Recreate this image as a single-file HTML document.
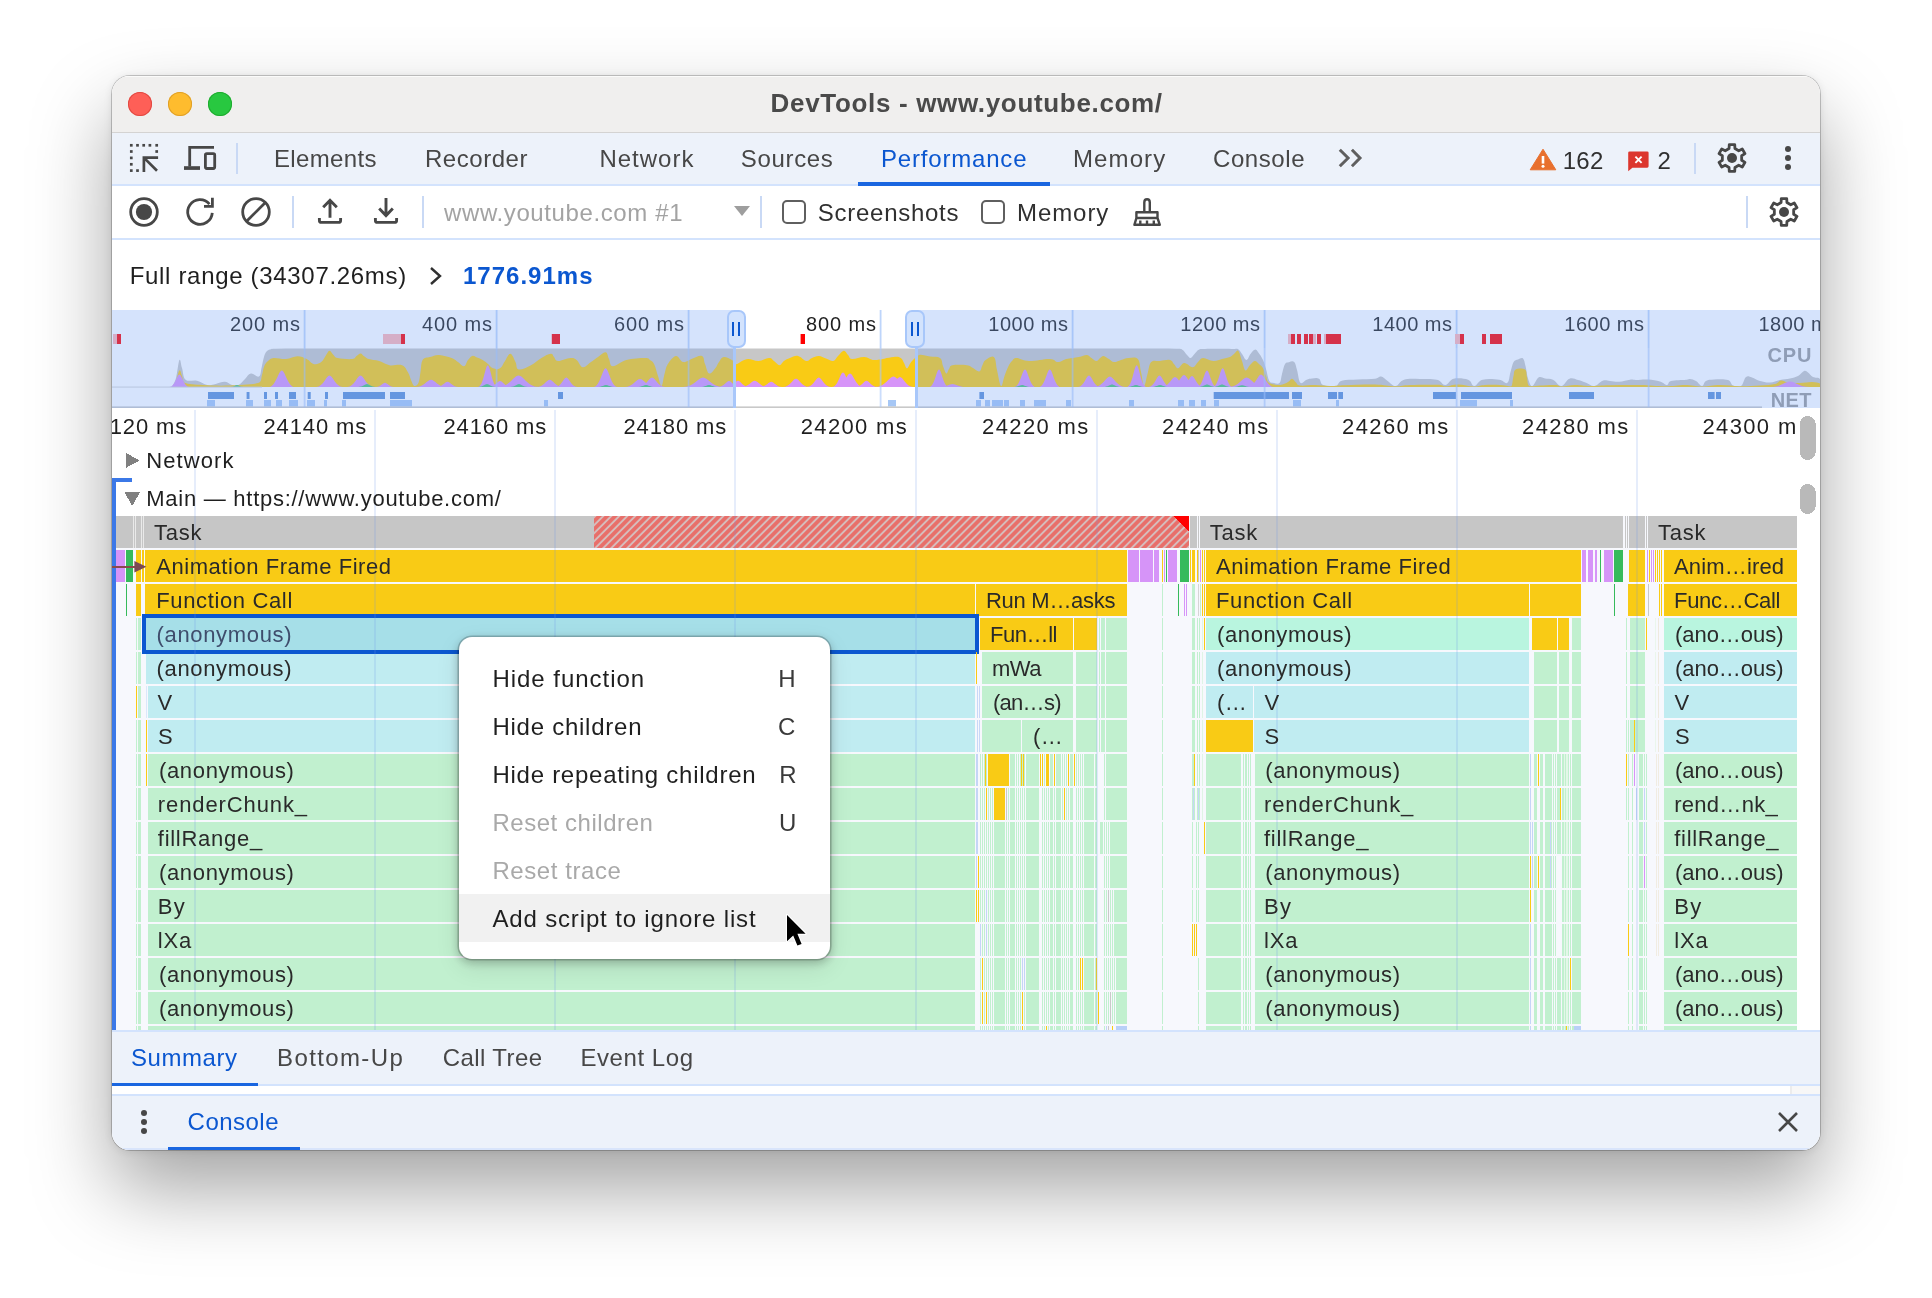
<!DOCTYPE html>
<html lang="en"><head><meta charset="utf-8"><title>DevTools - www.youtube.com/</title>
<style>
html,body{margin:0;padding:0;background:#fff;}
body{width:1932px;height:1298px;position:relative;overflow:hidden;font-family:"Liberation Sans", Arial, sans-serif;}
#shadow{position:absolute;left:112px;top:76px;width:1708px;height:1074px;border-radius:18px;
 box-shadow:0 0 0 1px rgba(0,0,0,.2), 0 39px 80px 0 rgba(0,0,0,.36), 0 1px 8px rgba(0,0,0,.10);}
#win{position:absolute;left:112px;top:76px;width:1708px;height:1074px;border-radius:18px;overflow:hidden;background:#fff;}
#pg{position:absolute;left:-112px;top:-76px;width:1932px;height:1298px;}
.tl{position:absolute;left:0;top:0;width:1932px;height:1298px;will-change:transform;}
svg{position:absolute;overflow:visible}
</style></head><body>
<div id="shadow"></div>
<div id="win"><div id="pg">
<div style="position:absolute;left:112px;top:76px;width:1708px;height:56px;background:#f0efee;"></div>
<div style="position:absolute;left:112px;top:76px;width:1708px;height:1px;background:#fbfbfa;"></div>
<div style="position:absolute;left:112px;top:132px;width:1708px;height:1px;background:#d4d3d2;"></div>
<div style="position:absolute;left:128px;top:92px;width:24px;height:24px;border-radius:50%;background:#fe5f57;box-shadow:inset 0 0 0 1px #e14942;"></div>
<div style="position:absolute;left:168px;top:92px;width:24px;height:24px;border-radius:50%;background:#febc2e;box-shadow:inset 0 0 0 1px #e0a028;"></div>
<div style="position:absolute;left:208px;top:92px;width:24px;height:24px;border-radius:50%;background:#28c840;box-shadow:inset 0 0 0 1px #1fab2f;"></div>
<div style="position:absolute;left:112px;top:133px;width:1708px;height:51px;background:#edf2fa;"></div>
<div style="position:absolute;left:112px;top:184px;width:1708px;height:2px;background:#d3e3fd;"></div>
<div style="position:absolute;left:236px;top:143px;width:2px;height:31px;background:#c9d9f5;"></div>
<div style="position:absolute;left:858px;top:182.4px;width:192px;height:3.6px;background:#1a66e0;"></div>
<div style="position:absolute;left:1694px;top:143px;width:2px;height:31px;background:#c9d9f5;"></div>
<div style="position:absolute;left:112px;top:186px;width:1708px;height:52px;background:#fff;"></div>
<div style="position:absolute;left:112px;top:238px;width:1708px;height:2px;background:#d3e3fd;"></div>
<div style="position:absolute;left:292px;top:196px;width:2px;height:32px;background:#c9d9f5;"></div>
<div style="position:absolute;left:422px;top:196px;width:2px;height:32px;background:#c9d9f5;"></div>
<div style="position:absolute;left:760px;top:196px;width:2px;height:32px;background:#c9d9f5;"></div>
<div style="position:absolute;left:1746px;top:196px;width:2px;height:32px;background:#c9d9f5;"></div>
<div style="position:absolute;left:782px;top:200px;width:20px;height:20px;border:2px solid #5f5f5f;border-radius:5px;background:#fff"></div>
<div style="position:absolute;left:981px;top:200px;width:20px;height:20px;border:2px solid #5f5f5f;border-radius:5px;background:#fff"></div>
<svg style="left:734px;top:206px" width="16" height="10"><path d="M0 0H16L8 10Z" fill="#9e9e9e"/></svg>
<div style="position:absolute;left:112px;top:240px;width:1708px;height:70px;background:#fff;"></div>
<svg style="left:428px;top:266px" width="16" height="20"><path d="M3 2L12 10L3 18" fill="none" stroke="#303030" stroke-width="2.4"/></svg>
<div style="position:absolute;left:112px;top:1030px;width:1708px;height:2px;background:#d3e3fd;"></div>
<div style="position:absolute;left:112px;top:1032px;width:1708px;height:52px;background:#edf2fa;"></div>
<div style="position:absolute;left:112px;top:1084px;width:1708px;height:2px;background:#d3e3fd;"></div>
<div style="position:absolute;left:112px;top:1086px;width:1708px;height:8px;background:#fff;"></div>
<div style="position:absolute;left:1790px;top:1086px;width:30px;height:8px;background:#f7f7f7;"></div>
<div style="position:absolute;left:1790px;top:1086px;width:2px;height:8px;background:#ececec;"></div>
<div style="position:absolute;left:112px;top:1094px;width:1708px;height:2px;background:#d3e3fd;"></div>
<div style="position:absolute;left:112px;top:1096px;width:1708px;height:54px;background:#edf2fa;"></div>
<div style="position:absolute;left:112px;top:1148px;width:1708px;height:2px;background:#d9e5fb;"></div>
<div style="position:absolute;left:112px;top:1083px;width:146px;height:3px;background:#1a66e0;"></div>
<div style="position:absolute;left:168px;top:1147px;width:132px;height:3px;background:#1a66e0;"></div>
<div style="position:absolute;left:141px;top:1110.3px;width:6px;height:6px;border-radius:50%;background:#474747"></div>
<div style="position:absolute;left:141px;top:1119px;width:6px;height:6px;border-radius:50%;background:#474747"></div>
<div style="position:absolute;left:141px;top:1128px;width:6px;height:6px;border-radius:50%;background:#474747"></div>
<svg style="left:1777px;top:1111px" width="22" height="22"><path d="M2 2L20 20M20 2L2 20" stroke="#474747" stroke-width="2.6" fill="none"/></svg>
<svg style="left:112px;top:310px" width="1708" height="98" viewBox="112 310 1708 98" shape-rendering="auto"><rect x="112" y="310" width="1708" height="98" fill="#fff"/><path d="M172.0 387.0C172.8 385.3 174.6 383.1 176.0 378.0C177.4 372.9 178.3 361.9 179.4 360.0C180.5 358.1 180.8 364.3 182.0 368.0C183.2 371.7 182.8 377.3 185.6 379.7C188.4 382.1 192.9 379.7 197.0 380.7C201.1 381.7 203.8 384.4 207.3 385.0C210.8 385.6 212.2 384.5 215.6 383.9C219.0 383.3 221.9 381.6 225.0 381.8C228.1 382.0 229.5 384.4 232.0 385.0C234.5 385.6 235.9 386.1 238.4 385.0C240.9 383.9 242.6 381.2 245.0 379.0C247.4 376.8 248.1 374.0 250.8 373.5C253.5 373.0 257.0 377.6 259.0 376.6C261.0 375.6 260.7 371.2 261.5 368.0C262.3 364.8 262.5 362.7 263.2 360.0C263.9 357.3 264.2 355.8 265.0 354.0C265.8 352.2 266.2 351.6 267.3 350.7C268.4 349.8 269.4 349.6 271.0 349.2C272.6 348.8 271.0 348.8 275.6 348.7C447.6 348.6 1003.7 348.5 1176.0 348.7C1182.3 348.9 1180.2 348.5 1182.3 349.7C1184.4 350.9 1185.4 353.4 1187.0 355.0C1188.6 356.6 1189.2 358.2 1190.6 358.0C1192.0 357.8 1192.9 355.6 1194.5 354.0C1196.1 352.4 1196.8 350.7 1198.8 349.7C1200.8 348.7 1198.8 349.1 1205.0 348.9C1211.3 348.7 1225.7 348.8 1232.0 348.9C1238.2 349.0 1236.3 348.3 1238.2 349.3C1240.1 350.3 1240.4 352.0 1242.0 354.0C1243.6 356.0 1244.9 360.0 1246.5 360.0C1248.1 360.0 1248.9 356.0 1250.5 354.0C1252.1 352.0 1253.3 350.1 1254.7 349.7C1256.1 349.3 1256.4 350.0 1258.0 352.0C1259.6 354.0 1261.5 356.8 1263.0 360.0C1264.5 363.2 1264.8 365.1 1266.0 369.0C1267.2 372.9 1267.7 378.0 1269.2 380.7C1270.7 383.4 1272.0 382.6 1274.0 383.0C1276.0 383.4 1278.2 384.5 1279.7 382.8C1281.2 381.1 1281.0 377.5 1282.0 374.0C1283.0 370.5 1283.6 366.4 1284.9 364.2C1286.2 362.0 1287.2 362.6 1289.0 362.2C1290.8 361.8 1292.7 360.6 1294.2 362.1C1295.7 363.6 1295.8 366.1 1297.0 370.0C1298.2 373.9 1298.6 381.0 1300.4 382.8C1302.2 384.6 1304.4 380.5 1306.6 379.7C1308.8 378.9 1309.6 378.7 1312.0 378.5C1314.4 378.3 1316.9 377.5 1319.0 378.7C1321.1 379.9 1320.0 383.6 1323.2 385.0C1326.4 386.4 1332.1 386.8 1335.6 386.0C1339.1 385.2 1337.5 381.9 1341.8 380.7C1346.1 379.5 1351.7 379.9 1358.0 379.5C1364.3 379.1 1370.6 379.3 1375.0 378.7C1379.4 378.1 1378.8 376.2 1381.1 376.6C1383.4 377.0 1384.5 378.9 1387.3 380.7C1390.1 382.5 1392.4 386.2 1395.6 386.0C1398.8 385.8 1399.4 381.0 1404.0 379.7C1408.6 378.4 1413.7 379.0 1420.0 379.0C1426.3 379.0 1432.2 378.6 1437.0 379.7C1441.8 380.8 1442.1 385.2 1445.3 385.0C1448.5 384.8 1449.3 379.7 1453.6 378.7C1457.9 377.7 1464.2 378.3 1468.1 379.7C1472.0 381.1 1471.5 386.0 1474.3 386.0C1477.1 386.0 1477.9 380.9 1482.6 379.7C1487.3 378.5 1494.5 379.1 1499.2 379.7C1503.9 380.3 1505.3 384.3 1507.4 382.8C1509.5 381.3 1509.3 375.9 1510.5 372.0C1511.7 368.1 1512.2 364.5 1513.6 362.1C1515.0 359.7 1516.2 360.2 1518.0 359.5C1519.8 358.8 1521.6 357.2 1523.0 358.4C1524.4 359.6 1524.5 362.1 1525.5 366.0C1526.5 369.9 1526.8 374.9 1528.1 378.7C1529.4 382.5 1530.3 386.2 1532.3 386.0C1534.3 385.8 1536.1 379.0 1538.5 377.6C1540.9 376.2 1542.2 378.1 1545.0 378.5C1547.8 378.9 1549.9 378.3 1553.0 379.7C1556.1 381.1 1558.2 386.2 1561.3 386.0C1564.4 385.8 1566.3 379.8 1569.5 378.7C1572.7 377.6 1574.8 379.2 1578.0 380.0C1581.2 380.8 1583.0 381.7 1586.1 382.8C1589.2 383.9 1591.2 386.4 1594.4 386.0C1597.6 385.6 1599.7 381.6 1602.7 380.7C1605.7 379.8 1606.9 380.8 1610.0 381.0C1613.1 381.2 1615.4 382.0 1619.2 381.8C1623.0 381.6 1626.8 380.0 1630.0 379.7C1633.2 379.4 1632.6 380.0 1636.0 380.0C1639.4 380.0 1643.4 379.2 1648.0 379.5C1652.6 379.8 1656.4 380.5 1660.0 381.5C1663.6 382.5 1664.9 385.1 1667.0 385.0C1669.1 384.9 1667.4 382.0 1671.0 381.0C1674.6 380.0 1682.4 380.2 1686.0 379.8C1689.6 379.4 1688.1 378.8 1690.0 379.0C1691.9 379.2 1693.7 379.7 1696.0 381.0C1698.3 382.3 1700.1 386.0 1702.0 386.0C1703.9 386.0 1703.7 382.2 1706.0 381.0C1708.3 379.8 1709.8 379.7 1714.0 379.5C1718.2 379.3 1724.4 378.9 1728.0 380.0C1731.6 381.1 1730.5 384.4 1733.0 385.5C1735.5 386.6 1738.5 387.0 1741.0 386.0C1743.5 384.4 1743.9 378.6 1746.0 377.0C1748.1 375.4 1749.3 376.7 1752.0 377.5C1754.7 378.3 1756.6 380.1 1760.0 381.0C1763.4 381.9 1766.2 382.7 1770.0 382.5C1773.8 382.3 1776.2 380.8 1780.0 380.0C1783.8 379.2 1786.6 379.3 1790.0 378.5C1793.4 377.7 1795.3 377.4 1798.0 376.0C1800.7 374.6 1802.1 371.7 1804.0 371.0C1805.9 370.3 1806.3 371.4 1808.0 372.5C1809.7 373.6 1810.7 375.8 1813.0 377.0C1815.3 378.2 1818.7 377.1 1820.0 379.0C1820.0 380.9 1820.0 385.5 1820.0 387.0Z" fill="#c7c7c7"/><path d="M172.0 387.0C172.8 385.9 174.6 384.2 176.0 381.0C177.4 377.8 178.3 371.3 179.4 370.4C180.5 369.4 181.0 373.6 182.0 376.0C183.0 378.4 182.0 381.1 184.5 382.8C188.5 384.5 194.4 384.5 203.0 385.0C211.6 385.5 219.4 385.9 230.0 385.5C240.6 385.1 252.9 384.8 259.0 382.8C262.0 380.8 261.0 378.1 262.0 375.0C263.0 371.9 263.1 369.0 264.2 366.3C265.3 363.6 266.2 362.6 268.0 361.0C269.8 359.4 270.2 358.4 273.6 358.0C277.0 357.6 281.5 359.3 286.0 359.0C290.5 358.7 293.5 356.3 297.4 356.3C301.3 356.3 303.5 357.5 306.7 359.0C309.9 360.5 311.2 363.6 314.0 364.2C316.8 364.8 319.0 363.7 321.2 362.1C323.4 360.5 323.9 358.2 325.5 356.0C327.1 353.8 328.0 350.9 329.5 350.7C331.0 350.5 331.9 353.6 333.5 355.0C335.1 356.4 334.1 357.2 337.7 358.0C341.3 358.8 348.6 359.4 352.2 359.0C355.8 358.6 354.9 357.1 356.5 356.0C358.1 354.9 359.0 353.3 360.5 353.4C362.0 353.5 362.9 355.4 364.5 356.5C366.1 357.6 366.0 358.1 368.8 359.0C371.6 359.9 375.3 359.8 379.2 361.0C383.1 362.2 385.2 364.4 389.5 365.2C393.8 366.0 398.5 363.8 402.0 365.2C405.5 366.6 406.4 369.7 408.1 372.5C409.8 375.3 409.8 377.4 411.0 380.0C412.2 382.6 412.9 385.5 414.3 386.0C415.7 386.5 417.3 385.5 418.5 382.8C419.7 380.1 419.7 376.3 420.5 372.0C421.3 367.7 420.8 362.9 422.6 360.0C424.4 357.1 426.8 358.0 430.0 357.0C433.2 356.0 435.1 354.7 439.2 354.9C443.3 355.1 448.0 356.7 451.6 358.0C455.2 359.3 455.6 360.4 458.0 362.0C460.4 363.6 462.1 366.7 464.0 366.3C465.9 365.9 466.4 362.0 468.0 360.0C469.6 358.0 470.6 356.4 472.3 355.9C474.0 355.4 475.0 356.7 477.0 357.5C479.0 358.3 480.6 358.8 482.7 360.0C484.8 361.2 486.0 362.4 488.0 364.0C490.0 365.6 490.7 367.5 493.0 368.3C495.3 369.1 497.7 369.7 500.0 368.3C502.3 366.9 503.0 363.8 505.0 361.0C507.0 358.2 508.4 353.6 510.4 353.8C512.4 354.0 513.9 359.0 515.5 362.0C517.1 365.0 515.7 368.8 518.6 369.4C521.5 370.0 526.7 367.4 531.0 365.2C535.3 363.0 537.7 360.2 541.4 358.0C545.1 355.8 548.3 354.0 550.7 353.8C553.1 353.6 552.6 355.6 554.0 357.0C555.4 358.4 554.9 360.8 558.0 361.0C561.1 361.2 566.9 358.2 570.4 358.0C573.9 357.8 574.2 358.2 576.6 360.0C579.0 361.8 580.1 366.9 582.8 367.3C585.5 367.7 588.1 364.1 591.0 362.1C593.9 360.1 595.2 358.9 598.0 357.0C600.8 355.1 603.5 351.8 605.6 352.2C607.7 352.6 607.6 356.3 609.0 359.0C610.4 361.7 609.5 366.1 612.8 366.3C616.1 366.5 620.2 361.6 626.3 360.0C632.4 358.4 640.5 358.0 645.0 358.0C649.5 358.0 648.3 358.8 650.0 360.0C651.7 361.2 652.7 361.2 654.2 364.2C655.7 367.2 656.6 371.9 658.0 376.0C659.4 380.1 660.3 386.4 661.5 386.0C662.7 385.6 663.3 378.1 664.5 374.0C665.7 369.9 665.5 367.6 667.7 364.2C669.9 360.8 673.1 356.3 676.0 355.9C678.9 355.5 680.3 361.5 683.2 362.1C686.1 362.7 687.9 360.2 691.5 359.0C695.1 357.8 699.3 354.9 701.9 355.9C704.5 356.8 703.6 360.7 705.0 364.0C706.4 367.3 707.1 372.7 709.1 373.5C711.1 374.3 713.4 370.5 715.3 368.3C717.2 366.1 717.4 364.1 719.0 362.0C720.6 359.9 721.1 357.4 723.6 357.0C726.1 356.6 729.5 358.6 731.9 360.0C734.3 361.4 734.1 364.0 736.0 364.2C737.9 364.4 739.6 362.0 742.0 361.0C744.4 360.0 745.2 359.0 748.4 359.0C751.6 359.0 754.8 361.2 758.8 361.0C762.8 360.8 766.3 358.0 769.2 358.0C772.1 358.0 772.0 359.6 774.0 361.0C776.0 362.4 777.6 365.2 779.5 365.2C781.4 365.2 782.0 362.4 784.0 361.0C786.0 359.6 787.2 359.0 789.9 358.0C792.6 357.0 795.0 355.3 798.1 355.9C801.2 356.5 803.8 360.6 806.4 361.0C809.0 361.4 809.6 359.0 812.0 358.0C814.4 357.0 816.1 355.8 818.8 355.9C821.5 356.0 823.2 357.5 826.0 358.5C828.8 359.5 831.0 361.5 833.3 361.0C835.6 360.5 836.0 358.0 838.0 356.0C840.0 354.0 841.8 350.9 843.7 350.7C845.6 350.5 846.4 353.4 848.0 355.0C849.6 356.6 848.9 358.6 852.0 359.0C855.1 359.4 860.1 356.8 864.4 357.0C868.7 357.2 869.2 360.0 874.7 360.0C880.2 360.0 888.5 357.4 893.4 357.0C898.3 356.6 898.7 356.9 900.7 358.0C902.7 359.1 902.8 361.0 904.0 363.0C905.2 365.0 905.8 368.3 907.0 368.3C908.2 368.3 909.2 364.8 910.5 363.0C911.8 361.2 912.3 360.5 914.0 359.0C915.7 357.5 916.3 355.4 919.3 354.9C922.3 354.4 926.1 355.9 930.0 356.5C933.9 357.1 937.5 356.2 940.0 358.0C942.5 359.8 941.8 363.1 943.0 366.0C944.2 368.9 945.2 372.9 946.3 373.5C947.4 374.1 947.8 370.6 949.0 369.0C950.2 367.4 949.1 365.9 952.5 365.2C955.9 364.5 963.1 364.7 967.0 365.2C970.9 365.7 970.6 366.8 973.0 368.0C975.4 369.2 977.6 372.0 979.4 371.4C981.2 370.8 981.3 367.2 982.5 365.0C983.7 362.8 983.4 361.5 985.6 360.0C987.8 358.5 991.7 355.1 993.9 357.0C996.1 358.9 995.7 364.5 997.0 370.0C998.3 375.5 999.6 384.9 1001.0 386.0C1002.4 387.0 1003.1 379.7 1004.5 376.0C1005.9 372.3 1007.0 369.2 1008.4 366.3C1009.8 363.4 1010.4 362.6 1012.0 361.0C1013.6 359.4 1013.4 358.0 1016.6 358.0C1019.8 358.0 1022.7 360.8 1029.0 361.0C1035.3 361.2 1044.3 358.8 1049.8 359.0C1055.3 359.2 1054.9 362.1 1058.0 362.1C1061.1 362.1 1062.3 360.0 1066.3 359.0C1070.3 358.0 1074.9 357.8 1078.8 357.0C1082.7 356.2 1084.6 354.7 1087.0 354.9C1089.4 355.1 1089.7 356.8 1091.5 358.0C1093.3 359.2 1094.8 361.0 1096.4 361.0C1098.0 361.0 1098.6 359.0 1100.0 358.0C1101.4 357.0 1101.9 355.7 1103.6 355.9C1105.3 356.1 1107.0 357.8 1109.0 359.0C1111.0 360.2 1111.7 361.9 1114.0 362.1C1116.3 362.3 1118.3 360.8 1121.0 360.0C1123.7 359.2 1125.2 358.2 1128.4 358.0C1131.6 357.8 1135.4 356.3 1137.8 359.0C1140.2 361.7 1139.8 366.9 1141.0 372.0C1142.2 377.1 1142.8 385.6 1144.0 386.0C1145.2 386.4 1146.1 378.5 1147.5 374.0C1148.9 369.5 1148.8 364.6 1151.2 362.1C1153.6 359.6 1156.4 361.4 1160.0 361.0C1163.6 360.6 1167.2 359.4 1169.9 360.0C1172.6 360.6 1172.4 362.4 1174.0 364.0C1175.6 365.6 1176.1 368.5 1178.1 368.3C1180.1 368.1 1181.5 363.3 1184.3 363.1C1187.1 362.9 1190.0 367.5 1192.6 367.3C1195.2 367.1 1196.0 363.8 1198.0 362.0C1200.0 360.2 1200.1 358.2 1203.0 358.0C1205.9 357.8 1209.7 360.8 1213.3 361.0C1216.9 361.2 1218.8 359.8 1222.0 359.0C1225.2 358.2 1227.6 357.9 1229.9 357.0C1232.2 356.1 1232.4 355.2 1234.0 354.0C1235.6 352.8 1236.7 349.4 1238.2 350.7C1239.7 352.0 1240.6 357.3 1242.0 361.0C1243.4 364.7 1243.9 369.6 1245.4 370.4C1246.9 371.2 1248.2 366.8 1250.0 365.0C1251.8 363.2 1253.0 361.2 1254.7 361.0C1256.4 360.8 1257.4 362.6 1259.0 364.0C1260.6 365.4 1261.7 366.0 1263.0 368.3C1264.3 370.6 1264.8 373.2 1266.0 376.0C1267.2 378.8 1266.5 381.1 1269.2 382.8C1271.9 384.5 1276.4 385.2 1280.0 385.0C1283.6 384.8 1285.7 383.2 1288.0 382.0C1290.3 380.8 1290.5 378.6 1292.0 378.7C1293.5 378.8 1294.5 381.2 1296.0 382.5C1297.5 383.8 1296.4 385.0 1300.0 385.5C1303.6 386.0 1309.3 384.9 1315.0 385.0C1320.7 385.1 1324.3 385.9 1330.0 386.0C1335.7 386.1 1336.5 385.6 1345.0 385.3C1353.5 385.0 1365.5 384.3 1375.0 384.5C1384.5 384.7 1388.3 386.2 1395.0 386.3C1401.7 386.4 1402.0 385.3 1410.0 385.0C1418.0 384.7 1430.2 384.6 1437.0 384.8C1443.8 385.0 1442.0 386.4 1446.0 386.3C1450.0 386.2 1452.7 384.5 1458.0 384.5C1463.3 384.5 1468.9 386.4 1474.0 386.5C1479.1 386.6 1480.1 385.3 1485.0 385.0C1489.9 384.7 1495.6 384.8 1500.0 385.0C1504.4 385.2 1505.8 385.8 1508.0 386.0C1510.2 386.2 1510.6 387.0 1511.6 386.0C1512.6 384.1 1512.7 379.2 1513.5 376.0C1514.3 372.8 1513.5 370.7 1515.7 369.4C1517.9 368.1 1522.9 368.0 1525.0 369.4C1527.0 370.8 1526.2 373.8 1527.0 377.0C1527.8 380.2 1527.0 384.4 1529.2 386.0C1531.7 387.0 1535.1 385.7 1540.0 385.5C1544.9 385.3 1550.8 384.8 1555.0 385.0C1559.2 385.2 1558.2 386.5 1562.0 386.5C1565.8 386.5 1569.7 385.1 1575.0 385.0C1580.3 384.9 1583.3 386.0 1590.0 386.0C1596.7 386.0 1600.5 385.4 1610.0 385.2C1619.5 385.0 1629.5 384.8 1640.0 385.0C1650.5 385.2 1656.5 386.3 1665.0 386.3C1673.5 386.3 1678.0 385.0 1685.0 385.0C1692.0 385.0 1695.3 386.5 1702.0 386.5C1708.7 386.5 1712.8 385.0 1720.0 385.0C1727.2 385.0 1732.4 386.2 1740.0 386.3C1747.6 386.4 1753.3 385.9 1760.0 385.5C1766.7 385.1 1771.0 384.9 1775.0 384.0C1779.0 383.1 1778.5 380.8 1781.0 380.5C1783.5 380.2 1784.4 382.0 1788.0 382.5C1791.6 383.0 1795.4 383.1 1800.0 383.0C1804.6 382.9 1808.2 381.9 1812.0 382.0C1815.8 382.1 1818.5 382.6 1820.0 383.5C1820.0 384.4 1820.0 386.3 1820.0 387.0Z" fill="#f9cb15"/><path d="M169.5 387.0C174.9 387.0 176.9 374.5 179.4 374.5C181.9 374.5 183.9 387.0 189.3 387.0ZM268.6 387.0C275.8 387.0 278.5 370.4 281.8 370.4C285.1 370.4 287.8 387.0 295.0 387.0ZM316.3 387.0C323.5 387.0 326.2 375.6 329.5 375.6C332.8 375.6 335.5 387.0 342.7 387.0ZM347.3 387.0C354.5 387.0 357.2 375.6 360.5 375.6C363.8 375.6 366.5 387.0 373.7 387.0ZM376.2 387.0C381.0 387.0 382.8 382.8 385.0 382.8C387.2 382.8 389.0 387.0 393.8 387.0ZM415.6 387.0C424.0 387.0 427.1 379.7 431.0 379.7C434.9 379.7 438.0 387.0 446.4 387.0ZM436.5 387.0C442.5 387.0 444.8 381.8 447.5 381.8C450.2 381.8 452.5 387.0 458.5 387.0ZM477.9 387.0C483.3 387.0 485.3 365.2 487.8 365.2C490.3 365.2 492.3 387.0 497.7 387.0ZM489.0 387.0C495.0 387.0 497.2 381 500.0 381C502.8 381 505.0 387.0 511.0 387.0ZM498.8 387.0C509.6 387.0 513.6 375.6 518.6 375.6C523.6 375.6 527.6 387.0 538.4 387.0ZM536.5 387.0C543.7 387.0 546.4 379.7 549.7 379.7C553.0 379.7 555.7 387.0 562.9 387.0ZM555.3 387.0C561.3 387.0 563.5 377.6 566.3 377.6C569.0 377.6 571.3 387.0 577.3 387.0ZM593.5 387.0C600.1 387.0 602.6 368.3 605.6 368.3C608.6 368.3 611.1 387.0 617.7 387.0ZM624.6 387.0C633.0 387.0 636.1 379 640.0 379C643.9 379 647.0 387.0 655.4 387.0ZM638.8 387.0C646.0 387.0 648.7 377.5 652.0 377.5C655.3 377.5 658.0 387.0 665.2 387.0ZM683.2 387.0C694.0 387.0 698.0 377.6 703.0 377.6C708.0 377.6 712.0 387.0 722.8 387.0ZM718.0 387.0C724.0 387.0 726.2 381 729.0 381C731.8 381 734.0 387.0 740.0 387.0ZM727.0 387.0C733.0 387.0 735.2 380.7 738.0 380.7C740.8 380.7 743.0 387.0 749.0 387.0ZM741.5 387.0C748.7 387.0 751.4 380.7 754.7 380.7C758.0 380.7 760.7 387.0 767.9 387.0ZM760.2 387.0C766.2 387.0 768.5 381.8 771.2 381.8C774.0 381.8 776.2 387.0 782.2 387.0ZM782.8 387.0C790.0 387.0 792.7 378.7 796.0 378.7C799.3 378.7 802.0 387.0 809.2 387.0ZM806.7 387.0C813.3 387.0 815.8 377.6 818.8 377.6C821.8 377.6 824.3 387.0 830.9 387.0ZM832.0 387.0C838.0 387.0 840.2 372.5 843.0 372.5C845.8 372.5 848.0 387.0 854.0 387.0ZM836.8 387.0C844.0 387.0 846.7 373.5 850.0 373.5C853.3 373.5 856.0 387.0 863.2 387.0ZM855.5 387.0C861.5 387.0 863.8 380.7 866.5 380.7C869.2 380.7 871.5 387.0 877.5 387.0ZM875.8 387.0C885.4 387.0 889.0 376.6 893.4 376.6C897.8 376.6 901.4 387.0 911.0 387.0ZM886.8 387.0C894.0 387.0 896.7 377 900.0 377C903.3 377 906.0 387.0 913.2 387.0ZM929.1 387.0C934.5 387.0 936.5 369.4 939.0 369.4C941.5 369.4 943.5 387.0 948.9 387.0ZM939.3 387.0C946.5 387.0 949.2 383.9 952.5 383.9C955.8 383.9 958.5 387.0 965.7 387.0ZM1014.0 387.0C1020.0 387.0 1022.2 369.4 1025.0 369.4C1027.8 369.4 1030.0 387.0 1036.0 387.0ZM1038.8 387.0C1044.8 387.0 1047.0 369.4 1049.8 369.4C1052.5 369.4 1054.8 387.0 1060.8 387.0ZM1078.0 387.0C1084.0 387.0 1086.2 375.6 1089.0 375.6C1091.8 375.6 1094.0 387.0 1100.0 387.0ZM1094.4 387.0C1102.8 387.0 1106.0 376.6 1109.8 376.6C1113.6 376.6 1116.8 387.0 1125.2 387.0ZM1126.8 387.0C1132.2 387.0 1134.2 365.2 1136.7 365.2C1139.2 365.2 1141.2 387.0 1146.6 387.0ZM1148.5 387.0C1154.5 387.0 1156.8 375.6 1159.5 375.6C1162.2 375.6 1164.5 387.0 1170.5 387.0ZM1161.8 387.0C1169.0 387.0 1171.7 377 1175.0 377C1178.3 377 1181.0 387.0 1188.2 387.0ZM1170.8 387.0C1178.0 387.0 1180.7 375 1184.0 375C1187.3 375 1190.0 387.0 1197.2 387.0ZM1181.0 387.0C1187.0 387.0 1189.2 376 1192.0 376C1194.8 376 1197.0 387.0 1203.0 387.0ZM1197.1 387.0C1202.5 387.0 1204.5 370.4 1207.0 370.4C1209.5 370.4 1211.5 387.0 1216.9 387.0ZM1212.8 387.0C1218.2 387.0 1220.2 368.3 1222.7 368.3C1225.2 368.3 1227.2 387.0 1232.6 387.0ZM1229.0 387.0C1238.6 387.0 1242.2 377.6 1246.6 377.6C1251.0 377.6 1254.6 387.0 1264.2 387.0ZM1247.8 387.0C1255.0 387.0 1257.7 374.5 1261.0 374.5C1264.3 374.5 1267.0 387.0 1274.2 387.0ZM1770.2 387.0C1781.0 387.0 1785.0 381.5 1790.0 381.5C1795.0 381.5 1799.0 387.0 1809.8 387.0Z" fill="#d694f8"/><path d="M230.4 387.0C234.0 387.0 235.3 385 237.0 385C238.7 385 240.0 387.0 243.6 387.0ZM358.2 387.0C363.0 387.0 364.8 384 367.0 384C369.2 384 371.0 387.0 375.8 387.0ZM478.2 387.0C483.0 387.0 484.8 384 487.0 384C489.2 384 491.0 387.0 495.8 387.0ZM510.2 387.0C515.0 387.0 516.8 384 519.0 384C521.2 384 523.0 387.0 527.8 387.0ZM597.2 387.0C602.0 387.0 603.8 385 606.0 385C608.2 385 610.0 387.0 614.8 387.0ZM637.2 387.0C642.0 387.0 643.8 385 646.0 385C648.2 385 650.0 387.0 654.8 387.0ZM700.2 387.0C705.0 387.0 706.8 385 709.0 385C711.2 385 713.0 387.0 717.8 387.0ZM1013.2 387.0C1018.0 387.0 1019.8 385 1022.0 385C1024.2 385 1026.0 387.0 1030.8 387.0ZM1103.2 387.0C1108.0 387.0 1109.8 384.5 1112.0 384.5C1114.2 384.5 1116.0 387.0 1120.8 387.0ZM1127.2 387.0C1132.0 387.0 1133.8 385 1136.0 385C1138.2 385 1140.0 387.0 1144.8 387.0ZM1151.2 387.0C1156.0 387.0 1157.8 385 1160.0 385C1162.2 385 1164.0 387.0 1168.8 387.0ZM1198.2 387.0C1203.0 387.0 1204.8 384.5 1207.0 384.5C1209.2 384.5 1211.0 387.0 1215.8 387.0ZM1213.2 387.0C1218.0 387.0 1219.8 384.5 1222.0 384.5C1224.2 384.5 1226.0 387.0 1230.8 387.0ZM1233.2 387.0C1238.0 387.0 1239.8 385.3 1242.0 385.3C1244.2 385.3 1246.0 387.0 1250.8 387.0Z" fill="#4cc57a"/><rect x="112" y="387" width="1708" height="21" fill="#fff"/><rect x="112" y="386.6" width="150" height="0.9" fill="#cfcfcf"/><rect x="208" y="392" width="26.0" height="7" fill="#5e90d7"/><rect x="246.6" y="392" width="2.9" height="7" fill="#5e90d7"/><rect x="264" y="392" width="3.0" height="7" fill="#5e90d7"/><rect x="275" y="392" width="3.0" height="7" fill="#5e90d7"/><rect x="289" y="392" width="7.0" height="7" fill="#5e90d7"/><rect x="307.7" y="392" width="3.0" height="7" fill="#5e90d7"/><rect x="325" y="392" width="3.0" height="7" fill="#5e90d7"/><rect x="343" y="392" width="42.0" height="7" fill="#5e90d7"/><rect x="390" y="392" width="15.0" height="7" fill="#5e90d7"/><rect x="558" y="392" width="5.0" height="7" fill="#5e90d7"/><rect x="979.4" y="392" width="4.6" height="7" fill="#5e90d7"/><rect x="1213.7" y="392" width="75.3" height="7" fill="#5e90d7"/><rect x="1292" y="392" width="10.0" height="7" fill="#5e90d7"/><rect x="1328" y="392" width="9.0" height="7" fill="#5e90d7"/><rect x="1338.3" y="392" width="4.7" height="7" fill="#5e90d7"/><rect x="1433" y="392" width="23.0" height="7" fill="#5e90d7"/><rect x="1461" y="392" width="51.0" height="7" fill="#5e90d7"/><rect x="1569" y="392" width="25.0" height="7" fill="#5e90d7"/><rect x="1708" y="392" width="6.6" height="7" fill="#5e90d7"/><rect x="1716" y="392" width="5.0" height="7" fill="#5e90d7"/><rect x="207" y="400" width="8.0" height="6.6" fill="#a6c7f5"/><rect x="246" y="400" width="7.0" height="6.6" fill="#a6c7f5"/><rect x="264" y="400" width="7.0" height="6.6" fill="#a6c7f5"/><rect x="276" y="400" width="6.0" height="6.6" fill="#a6c7f5"/><rect x="289" y="400" width="9.0" height="6.6" fill="#a6c7f5"/><rect x="307" y="400" width="8.0" height="6.6" fill="#a6c7f5"/><rect x="324" y="400" width="3.0" height="6.6" fill="#a6c7f5"/><rect x="342" y="400" width="4.0" height="6.6" fill="#a6c7f5"/><rect x="390" y="400" width="22.0" height="6.6" fill="#a6c7f5"/><rect x="544" y="400" width="4.0" height="6.6" fill="#a6c7f5"/><rect x="888" y="400" width="8.0" height="6.6" fill="#a6c7f5"/><rect x="976" y="400" width="5.0" height="6.6" fill="#a6c7f5"/><rect x="985" y="400" width="5.0" height="6.6" fill="#a6c7f5"/><rect x="992" y="400" width="11.0" height="6.6" fill="#a6c7f5"/><rect x="1004" y="400" width="5.0" height="6.6" fill="#a6c7f5"/><rect x="1020" y="400" width="5.0" height="6.6" fill="#a6c7f5"/><rect x="1034" y="400" width="12.0" height="6.6" fill="#a6c7f5"/><rect x="1066" y="400" width="5.0" height="6.6" fill="#a6c7f5"/><rect x="1129" y="400" width="5.0" height="6.6" fill="#a6c7f5"/><rect x="1178" y="400" width="6.0" height="6.6" fill="#a6c7f5"/><rect x="1189" y="400" width="6.0" height="6.6" fill="#a6c7f5"/><rect x="1201" y="400" width="5.0" height="6.6" fill="#a6c7f5"/><rect x="1214" y="400" width="5.0" height="6.6" fill="#a6c7f5"/><rect x="1293" y="400" width="8.0" height="6.6" fill="#a6c7f5"/><rect x="1336" y="400" width="3.0" height="6.6" fill="#a6c7f5"/><rect x="1460" y="400" width="17.0" height="6.6" fill="#a6c7f5"/><rect x="1510" y="400" width="3.0" height="6.6" fill="#a6c7f5"/><rect x="112" y="406.4" width="1650" height="1.6" fill="#c9c9c9"/><rect x="303.7" y="310" width="1.8" height="38" fill="#a8c7fa" opacity=".75"/><rect x="303.7" y="348" width="1.8" height="59" fill="#a8c7fa" opacity=".6"/><rect x="495.7" y="310" width="1.8" height="38" fill="#a8c7fa" opacity=".75"/><rect x="495.7" y="348" width="1.8" height="59" fill="#a8c7fa" opacity=".6"/><rect x="687.7" y="310" width="1.8" height="38" fill="#a8c7fa" opacity=".75"/><rect x="687.7" y="348" width="1.8" height="59" fill="#a8c7fa" opacity=".6"/><rect x="879.7" y="310" width="1.8" height="38" fill="#a8c7fa" opacity=".75"/><rect x="879.7" y="348" width="1.8" height="59" fill="#a8c7fa" opacity=".6"/><rect x="1071.7" y="310" width="1.8" height="38" fill="#a8c7fa" opacity=".75"/><rect x="1071.7" y="348" width="1.8" height="59" fill="#a8c7fa" opacity=".6"/><rect x="1263.7" y="310" width="1.8" height="38" fill="#a8c7fa" opacity=".75"/><rect x="1263.7" y="348" width="1.8" height="59" fill="#a8c7fa" opacity=".6"/><rect x="1455.7" y="310" width="1.8" height="38" fill="#a8c7fa" opacity=".75"/><rect x="1455.7" y="348" width="1.8" height="59" fill="#a8c7fa" opacity=".6"/><rect x="1647.7" y="310" width="1.8" height="38" fill="#a8c7fa" opacity=".75"/><rect x="1647.7" y="348" width="1.8" height="59" fill="#a8c7fa" opacity=".6"/><rect x="117" y="334" width="4.0" height="10" fill="#ff0000"/><rect x="113" y="334" width="4.0" height="10" fill="#ffb3b3"/><rect x="383" y="334" width="18.0" height="10" fill="#ffb3b3"/><rect x="401" y="334" width="4.0" height="10" fill="#ff0000"/><rect x="551.8" y="334" width="8.2" height="10" fill="#ff0000"/><rect x="800.6" y="334" width="4.4" height="10" fill="#ff0000"/><rect x="1288" y="334" width="3.0" height="10" fill="#ffb3b3"/><rect x="1291" y="334" width="4.0" height="10" fill="#ff0000"/><rect x="1297" y="334" width="4.0" height="10" fill="#ff0000"/><rect x="1304" y="334" width="4.0" height="10" fill="#ff0000"/><rect x="1309" y="334" width="4.0" height="10" fill="#ff0000"/><rect x="1313" y="334" width="3.0" height="10" fill="#ffb3b3"/><rect x="1317" y="334" width="4.0" height="10" fill="#ff0000"/><rect x="1324" y="334" width="2.0" height="10" fill="#ffb3b3"/><rect x="1326" y="334" width="15.0" height="10" fill="#ff0000"/><rect x="1455" y="334" width="5.0" height="10" fill="#ffb3b3"/><rect x="1460" y="334" width="4.0" height="10" fill="#ff0000"/><rect x="1482" y="334" width="4.0" height="10" fill="#ff0000"/><rect x="1490" y="334" width="12.0" height="10" fill="#ff0000"/></svg>
<svg style="left:112px;top:408px" width="1708" height="622" viewBox="112 408 1708 622" shape-rendering="crispEdges"><rect x="112" y="408" width="1708" height="622" fill="#fff"/><rect x="116" y="516" width="1681" height="514" fill="#f7f8fd"/><rect x="116.0" y="516" width="1073.0" height="32" fill="#c6c6c6"/><rect x="133.1" y="516" width="1.0" height="32" fill="#e9e9e9"/><rect x="135.1" y="516" width="1.0" height="32" fill="#e9e9e9"/><rect x="141.1" y="516" width="1.0" height="32" fill="#e9e9e9"/><rect x="143.1" y="516" width="1.0" height="32" fill="#e9e9e9"/><rect x="1190.4" y="516" width="6.2" height="32" fill="#c6c6c6"/><rect x="1198.0" y="516" width="1.0" height="32" fill="#c6c6c6"/><rect x="1200.0" y="516" width="423.0" height="32" fill="#c6c6c6"/><rect x="1624.5" y="516" width="1.0" height="32" fill="#c6c6c6"/><rect x="1626.6" y="516" width="1.0" height="32" fill="#c6c6c6"/><rect x="1629.4" y="516" width="15.6" height="32" fill="#c6c6c6"/><rect x="1646.0" y="516" width="0.8" height="32" fill="#c6c6c6"/><rect x="1647.8" y="516" width="149.4" height="32" fill="#c6c6c6"/><defs><pattern id="hatch" width="8" height="8" patternUnits="userSpaceOnUse" patternTransform="rotate(45) scale(0.7075)"><rect width="8" height="8" fill="#d6bcbb"/><rect width="4.9" height="8" fill="#e86f6a"/></pattern><clipPath id="tri"><rect x="594" y="516" width="595" height="32"/></clipPath></defs><rect x="594" y="516" width="595" height="32" fill="url(#hatch)"/><path d="M1173 516H1189.4V532.4Z" fill="#ff0000"/><rect x="116.0" y="550" width="9.0" height="32" fill="#d694f8"/><rect x="126.0" y="550" width="7.0" height="32" fill="#36ba5c"/><rect x="136.0" y="550" width="5.0" height="32" fill="#f9cb15"/><rect x="142.0" y="550" width="1.5" height="32" fill="#f9cb15"/><rect x="145.0" y="550" width="982.0" height="32" fill="#f9cb15"/><rect x="1128.2" y="550" width="10.5" height="32" fill="#d694f8"/><rect x="1140.3" y="550" width="12.4" height="32" fill="#d694f8"/><rect x="1154.2" y="550" width="4.8" height="32" fill="#d694f8"/><rect x="1161.6" y="550" width="1.0" height="32" fill="#f9cb15"/><rect x="1163.6" y="550" width="1.0" height="32" fill="#d694f8"/><rect x="1166.0" y="550" width="1.0" height="32" fill="#36ba5c"/><rect x="1168.2" y="550" width="8.8" height="32" fill="#d694f8"/><rect x="1180.2" y="550" width="8.6" height="32" fill="#36ba5c"/><rect x="1190.2" y="550" width="0.8" height="32" fill="#f9cb15"/><rect x="1191.8" y="550" width="3.0" height="32" fill="#f9cb15"/><rect x="1196.6" y="550" width="0.9" height="32" fill="#f9cb15"/><rect x="1198.2" y="550" width="0.8" height="32" fill="#c9c9c9"/><rect x="1199.8" y="550" width="0.8" height="32" fill="#d694f8"/><rect x="1201.8" y="550" width="0.8" height="32" fill="#f9cb15"/><rect x="1204.0" y="550" width="1.0" height="32" fill="#f9cb15"/><rect x="1206.3" y="550" width="375.0" height="32" fill="#f9cb15"/><rect x="1582.0" y="550" width="4.0" height="32" fill="#d694f8"/><rect x="1588.0" y="550" width="4.5" height="32" fill="#d694f8"/><rect x="1594.5" y="550" width="2.5" height="32" fill="#d694f8"/><rect x="1600.0" y="550" width="1.0" height="32" fill="#36ba5c"/><rect x="1604.0" y="550" width="8.8" height="32" fill="#d694f8"/><rect x="1614.3" y="550" width="8.7" height="32" fill="#36ba5c"/><rect x="1625.5" y="550" width="0.9" height="32" fill="#f9cb15"/><rect x="1627.6" y="550" width="0.8" height="32" fill="#f9cb15"/><rect x="1629.4" y="550" width="15.6" height="32" fill="#f9cb15"/><rect x="1647.0" y="550" width="1.0" height="32" fill="#d694f8"/><rect x="1649.0" y="550" width="1.0" height="32" fill="#f9cb15"/><rect x="1651.0" y="550" width="1.0" height="32" fill="#d694f8"/><rect x="1653.0" y="550" width="1.0" height="32" fill="#d694f8"/><rect x="1655.4" y="550" width="0.8" height="32" fill="#f9cb15"/><rect x="1657.4" y="550" width="0.8" height="32" fill="#f9cb15"/><rect x="1659.4" y="550" width="0.8" height="32" fill="#f9cb15"/><rect x="1661.4" y="550" width="1.0" height="32" fill="#f9cb15"/><rect x="1664.0" y="550" width="133.2" height="32" fill="#f9cb15"/><rect x="126.2" y="584" width="0.8" height="32" fill="#36ba5c"/><rect x="136.0" y="584" width="5.0" height="32" fill="#f9cb15"/><rect x="142.6" y="584" width="0.8" height="32" fill="#f9cb15"/><rect x="145.0" y="584" width="830.0" height="32" fill="#f9cb15"/><rect x="976.4" y="584" width="150.6" height="32" fill="#f9cb15"/><rect x="1162.0" y="584" width="1.0" height="32" fill="#c1f0cf"/><rect x="1178.0" y="584" width="1.2" height="32" fill="#36ba5c"/><rect x="1184.0" y="584" width="1.0" height="32" fill="#d694f8"/><rect x="1186.0" y="584" width="1.0" height="32" fill="#d694f8"/><rect x="1192.0" y="584" width="3.0" height="32" fill="#c1f0cf"/><rect x="1196.6" y="584" width="0.8" height="32" fill="#c1f0cf"/><rect x="1198.2" y="584" width="0.8" height="32" fill="#d5d5d5"/><rect x="1199.8" y="584" width="0.8" height="32" fill="#c1f0cf"/><rect x="1202.0" y="584" width="1.0" height="32" fill="#f9cb15"/><rect x="1204.0" y="584" width="1.0" height="32" fill="#f9cb15"/><rect x="1206.3" y="584" width="322.4" height="32" fill="#f9cb15"/><rect x="1530.2" y="584" width="51.1" height="32" fill="#f9cb15"/><rect x="1614.0" y="584" width="1.0" height="32" fill="#36ba5c"/><rect x="1628.3" y="584" width="16.7" height="32" fill="#f9cb15"/><rect x="1646.6" y="584" width="0.8" height="32" fill="#c9c9c9"/><rect x="1648.4" y="584" width="0.8" height="32" fill="#c9c9c9"/><rect x="1654.6" y="584" width="0.8" height="32" fill="#f9cb15"/><rect x="1656.6" y="584" width="0.8" height="32" fill="#f9cb15"/><rect x="1658.8" y="584" width="0.8" height="32" fill="#f9cb15"/><rect x="1660.8" y="584" width="1.0" height="32" fill="#f9cb15"/><rect x="1664.0" y="584" width="133.2" height="32" fill="#f9cb15"/><rect x="136.3" y="618" width="0.8" height="32" fill="#c1f0cf"/><rect x="138.0" y="618" width="3.0" height="32" fill="#c1f0cf"/><rect x="136.3" y="652" width="0.8" height="32" fill="#c1f0cf"/><rect x="138.0" y="652" width="3.0" height="32" fill="#c1f0cf"/><rect x="136.3" y="686" width="0.8" height="32" fill="#c1f0cf"/><rect x="138.0" y="686" width="3.0" height="32" fill="#c1f0cf"/><rect x="136.3" y="720" width="0.8" height="32" fill="#c1f0cf"/><rect x="138.0" y="720" width="3.0" height="32" fill="#c1f0cf"/><rect x="136.3" y="754" width="0.8" height="32" fill="#c1f0cf"/><rect x="138.0" y="754" width="3.0" height="32" fill="#c1f0cf"/><rect x="136.3" y="788" width="0.8" height="32" fill="#c1f0cf"/><rect x="138.0" y="788" width="3.0" height="32" fill="#c1f0cf"/><rect x="136.3" y="822" width="0.8" height="32" fill="#c1f0cf"/><rect x="138.0" y="822" width="3.0" height="32" fill="#c1f0cf"/><rect x="136.3" y="856" width="0.8" height="32" fill="#c1f0cf"/><rect x="138.0" y="856" width="3.0" height="32" fill="#c1f0cf"/><rect x="136.3" y="890" width="0.8" height="32" fill="#c1f0cf"/><rect x="138.0" y="890" width="3.0" height="32" fill="#c1f0cf"/><rect x="136.3" y="924" width="0.8" height="32" fill="#c1f0cf"/><rect x="138.0" y="924" width="3.0" height="32" fill="#c1f0cf"/><rect x="136.3" y="958" width="0.8" height="32" fill="#c1f0cf"/><rect x="138.0" y="958" width="3.0" height="32" fill="#c1f0cf"/><rect x="136.3" y="992" width="0.8" height="32" fill="#c1f0cf"/><rect x="138.0" y="992" width="3.0" height="32" fill="#c1f0cf"/><rect x="136.3" y="1026" width="0.8" height="4" fill="#c1f0cf"/><rect x="138.0" y="1026" width="3.0" height="4" fill="#c1f0cf"/><rect x="136.1" y="686" width="1.0" height="32" fill="#f9cb15"/><rect x="146.0" y="720" width="1.0" height="32" fill="#f9cb15"/><rect x="146.0" y="754" width="1.0" height="32" fill="#f9cb15"/><rect x="146.2" y="686" width="0.8" height="32" fill="#dbe7fb"/><rect x="146.0" y="652" width="829.0" height="32" fill="#c0ecf1"/><rect x="148.0" y="686" width="827.0" height="32" fill="#c0ecf1"/><rect x="148.0" y="720" width="827.0" height="32" fill="#c0ecf1"/><rect x="148.0" y="754" width="827.0" height="32" fill="#c1f0cf"/><rect x="148.0" y="788" width="827.0" height="32" fill="#c1f0cf"/><rect x="148.0" y="822" width="827.0" height="32" fill="#c1f0cf"/><rect x="148.0" y="856" width="827.0" height="32" fill="#c1f0cf"/><rect x="148.0" y="890" width="827.0" height="32" fill="#c1f0cf"/><rect x="148.0" y="924" width="827.0" height="32" fill="#c1f0cf"/><rect x="148.0" y="958" width="827.0" height="32" fill="#c1f0cf"/><rect x="148.0" y="992" width="827.0" height="32" fill="#c1f0cf"/><rect x="148.0" y="1026" width="827.0" height="4" fill="#c1f0cf"/><rect x="142" y="614" width="837" height="40" fill="#0b57d0"/><rect x="146" y="618" width="829" height="32" fill="#a6dfe8"/><rect x="980.2" y="618" width="92.5" height="32" fill="#f9cb15"/><rect x="1074.4" y="618" width="22.6" height="32" fill="#f9cb15"/><rect x="976.0" y="652" width="0.9" height="32" fill="#f9cb15"/><rect x="982.0" y="652" width="90.7" height="32" fill="#c1f0cf"/><rect x="1075.8" y="652" width="21.2" height="32" fill="#c1f0cf"/><rect x="982.0" y="686" width="90.7" height="32" fill="#c1f0cf"/><rect x="1075.8" y="686" width="21.2" height="32" fill="#c1f0cf"/><rect x="982.0" y="720" width="39.0" height="32" fill="#c1f0cf"/><rect x="1022.2" y="720" width="50.5" height="32" fill="#c1f0cf"/><rect x="1075.8" y="720" width="21.2" height="32" fill="#c1f0cf"/><rect x="977.2" y="686" width="0.8" height="32" fill="#c9d8f8"/><rect x="979.2" y="686" width="0.8" height="32" fill="#c9d8f8"/><rect x="977.2" y="720" width="0.8" height="32" fill="#c9d8f8"/><rect x="979.2" y="720" width="0.8" height="32" fill="#c9d8f8"/><rect x="1099.0" y="618" width="1.3" height="32" fill="#c1f0cf"/><rect x="1101.2" y="618" width="1.3" height="32" fill="#c1f0cf"/><rect x="1103.4" y="618" width="1.3" height="32" fill="#c1f0cf"/><rect x="1106.0" y="618" width="21.0" height="32" fill="#c1f0cf"/><rect x="1099.0" y="652" width="1.3" height="32" fill="#c1f0cf"/><rect x="1101.2" y="652" width="1.3" height="32" fill="#c1f0cf"/><rect x="1103.4" y="652" width="1.3" height="32" fill="#c1f0cf"/><rect x="1106.0" y="652" width="21.0" height="32" fill="#c1f0cf"/><rect x="1099.0" y="686" width="1.3" height="32" fill="#c1f0cf"/><rect x="1101.2" y="686" width="1.3" height="32" fill="#c1f0cf"/><rect x="1103.4" y="686" width="1.3" height="32" fill="#c1f0cf"/><rect x="1106.0" y="686" width="21.0" height="32" fill="#c1f0cf"/><rect x="1099.0" y="720" width="1.3" height="32" fill="#c1f0cf"/><rect x="1101.2" y="720" width="1.3" height="32" fill="#c1f0cf"/><rect x="1103.4" y="720" width="1.3" height="32" fill="#c1f0cf"/><rect x="1106.0" y="720" width="21.0" height="32" fill="#c1f0cf"/><rect x="993.9" y="754" width="11.0" height="32" fill="#c1f0cf"/><rect x="1010.0" y="754" width="5.1" height="32" fill="#c1f0cf"/><rect x="1026.1" y="754" width="12.7" height="32" fill="#c1f0cf"/><rect x="1049.8" y="754" width="3.1" height="32" fill="#c1f0cf"/><rect x="1056.1" y="754" width="4.7" height="32" fill="#c1f0cf"/><rect x="1070.2" y="754" width="2.9" height="32" fill="#c1f0cf"/><rect x="1084.1" y="754" width="9.8" height="32" fill="#c1f0cf"/><rect x="1094.7" y="754" width="2.2" height="32" fill="#c1f0cf"/><rect x="979.8" y="754" width="1.0" height="32" fill="#c1f0cf"/><rect x="981.9" y="754" width="1.0" height="32" fill="#c1f0cf"/><rect x="984.1" y="754" width="1.0" height="32" fill="#c1f0cf"/><rect x="986.1" y="754" width="1.0" height="32" fill="#c1f0cf"/><rect x="988.0" y="754" width="1.0" height="32" fill="#c1f0cf"/><rect x="990.0" y="754" width="1.0" height="32" fill="#c1f0cf"/><rect x="991.7" y="754" width="1.0" height="32" fill="#c1f0cf"/><rect x="1005.6" y="754" width="1.0" height="32" fill="#c1f0cf"/><rect x="1007.8" y="754" width="1.0" height="32" fill="#c1f0cf"/><rect x="1016.3" y="754" width="1.0" height="32" fill="#c1f0cf"/><rect x="1018.0" y="754" width="1.0" height="32" fill="#c1f0cf"/><rect x="1020.0" y="754" width="1.0" height="32" fill="#c1f0cf"/><rect x="1021.9" y="754" width="1.0" height="32" fill="#c1f0cf"/><rect x="1023.9" y="754" width="1.0" height="32" fill="#c1f0cf"/><rect x="1042.0" y="754" width="1.0" height="32" fill="#c1f0cf"/><rect x="1043.7" y="754" width="1.0" height="32" fill="#c1f0cf"/><rect x="1045.9" y="754" width="1.0" height="32" fill="#c1f0cf"/><rect x="1047.6" y="754" width="1.0" height="32" fill="#c1f0cf"/><rect x="1053.6" y="754" width="1.0" height="32" fill="#c1f0cf"/><rect x="1061.7" y="754" width="1.0" height="32" fill="#c1f0cf"/><rect x="1063.7" y="754" width="1.0" height="32" fill="#c1f0cf"/><rect x="1065.8" y="754" width="1.0" height="32" fill="#c1f0cf"/><rect x="1068.0" y="754" width="1.0" height="32" fill="#c1f0cf"/><rect x="1075.9" y="754" width="1.0" height="32" fill="#c1f0cf"/><rect x="1077.6" y="754" width="1.0" height="32" fill="#c1f0cf"/><rect x="1079.8" y="754" width="1.0" height="32" fill="#c1f0cf"/><rect x="1081.9" y="754" width="1.0" height="32" fill="#c1f0cf"/><rect x="1104.1" y="754" width="1.0" height="32" fill="#c1f0cf"/><rect x="1106.1" y="754" width="1.0" height="32" fill="#c1f0cf"/><rect x="1108.1" y="754" width="1.0" height="32" fill="#c1f0cf"/><rect x="1106.1" y="754" width="20.9" height="32" fill="#c1f0cf"/><rect x="993.9" y="788" width="11.0" height="32" fill="#c1f0cf"/><rect x="1010.0" y="788" width="5.1" height="32" fill="#c1f0cf"/><rect x="1026.1" y="788" width="12.7" height="32" fill="#c1f0cf"/><rect x="1049.8" y="788" width="3.1" height="32" fill="#c1f0cf"/><rect x="1056.1" y="788" width="4.7" height="32" fill="#c1f0cf"/><rect x="1070.2" y="788" width="2.9" height="32" fill="#c1f0cf"/><rect x="1084.1" y="788" width="9.8" height="32" fill="#c1f0cf"/><rect x="1094.7" y="788" width="2.2" height="32" fill="#c1f0cf"/><rect x="979.8" y="788" width="1.0" height="32" fill="#c1f0cf"/><rect x="981.9" y="788" width="1.0" height="32" fill="#c1f0cf"/><rect x="984.1" y="788" width="1.0" height="32" fill="#c1f0cf"/><rect x="986.1" y="788" width="1.0" height="32" fill="#c1f0cf"/><rect x="988.0" y="788" width="1.0" height="32" fill="#c1f0cf"/><rect x="990.0" y="788" width="1.0" height="32" fill="#c1f0cf"/><rect x="991.7" y="788" width="1.0" height="32" fill="#c1f0cf"/><rect x="1005.6" y="788" width="1.0" height="32" fill="#c1f0cf"/><rect x="1007.8" y="788" width="1.0" height="32" fill="#c1f0cf"/><rect x="1016.3" y="788" width="1.0" height="32" fill="#c1f0cf"/><rect x="1018.0" y="788" width="1.0" height="32" fill="#c1f0cf"/><rect x="1020.0" y="788" width="1.0" height="32" fill="#c1f0cf"/><rect x="1021.9" y="788" width="1.0" height="32" fill="#c1f0cf"/><rect x="1023.9" y="788" width="1.0" height="32" fill="#c1f0cf"/><rect x="1042.0" y="788" width="1.0" height="32" fill="#c1f0cf"/><rect x="1043.7" y="788" width="1.0" height="32" fill="#c1f0cf"/><rect x="1045.9" y="788" width="1.0" height="32" fill="#c1f0cf"/><rect x="1047.6" y="788" width="1.0" height="32" fill="#c1f0cf"/><rect x="1053.6" y="788" width="1.0" height="32" fill="#c1f0cf"/><rect x="1061.7" y="788" width="1.0" height="32" fill="#c1f0cf"/><rect x="1063.7" y="788" width="1.0" height="32" fill="#c1f0cf"/><rect x="1065.8" y="788" width="1.0" height="32" fill="#c1f0cf"/><rect x="1068.0" y="788" width="1.0" height="32" fill="#c1f0cf"/><rect x="1075.9" y="788" width="1.0" height="32" fill="#c1f0cf"/><rect x="1077.6" y="788" width="1.0" height="32" fill="#c1f0cf"/><rect x="1079.8" y="788" width="1.0" height="32" fill="#c1f0cf"/><rect x="1081.9" y="788" width="1.0" height="32" fill="#c1f0cf"/><rect x="1104.1" y="788" width="1.0" height="32" fill="#c1f0cf"/><rect x="1106.1" y="788" width="1.0" height="32" fill="#c1f0cf"/><rect x="1108.1" y="788" width="1.0" height="32" fill="#c1f0cf"/><rect x="1106.1" y="788" width="20.9" height="32" fill="#c1f0cf"/><rect x="993.9" y="822" width="11.0" height="32" fill="#c1f0cf"/><rect x="1010.0" y="822" width="5.1" height="32" fill="#c1f0cf"/><rect x="1026.1" y="822" width="12.7" height="32" fill="#c1f0cf"/><rect x="1049.8" y="822" width="3.1" height="32" fill="#c1f0cf"/><rect x="1056.1" y="822" width="4.7" height="32" fill="#c1f0cf"/><rect x="1070.2" y="822" width="2.9" height="32" fill="#c1f0cf"/><rect x="1084.1" y="822" width="9.8" height="32" fill="#c1f0cf"/><rect x="1094.7" y="822" width="2.2" height="32" fill="#c1f0cf"/><rect x="979.8" y="822" width="1.0" height="32" fill="#c1f0cf"/><rect x="981.9" y="822" width="1.0" height="32" fill="#c1f0cf"/><rect x="984.1" y="822" width="1.0" height="32" fill="#c1f0cf"/><rect x="986.1" y="822" width="1.0" height="32" fill="#c1f0cf"/><rect x="988.0" y="822" width="1.0" height="32" fill="#c1f0cf"/><rect x="990.0" y="822" width="1.0" height="32" fill="#c1f0cf"/><rect x="991.7" y="822" width="1.0" height="32" fill="#c1f0cf"/><rect x="1005.6" y="822" width="1.0" height="32" fill="#c1f0cf"/><rect x="1007.8" y="822" width="1.0" height="32" fill="#c1f0cf"/><rect x="1016.3" y="822" width="1.0" height="32" fill="#c1f0cf"/><rect x="1018.0" y="822" width="1.0" height="32" fill="#c1f0cf"/><rect x="1020.0" y="822" width="1.0" height="32" fill="#c1f0cf"/><rect x="1021.9" y="822" width="1.0" height="32" fill="#c1f0cf"/><rect x="1023.9" y="822" width="1.0" height="32" fill="#c1f0cf"/><rect x="1042.0" y="822" width="1.0" height="32" fill="#c1f0cf"/><rect x="1043.7" y="822" width="1.0" height="32" fill="#c1f0cf"/><rect x="1045.9" y="822" width="1.0" height="32" fill="#c1f0cf"/><rect x="1047.6" y="822" width="1.0" height="32" fill="#c1f0cf"/><rect x="1053.6" y="822" width="1.0" height="32" fill="#c1f0cf"/><rect x="1061.7" y="822" width="1.0" height="32" fill="#c1f0cf"/><rect x="1063.7" y="822" width="1.0" height="32" fill="#c1f0cf"/><rect x="1065.8" y="822" width="1.0" height="32" fill="#c1f0cf"/><rect x="1068.0" y="822" width="1.0" height="32" fill="#c1f0cf"/><rect x="1075.9" y="822" width="1.0" height="32" fill="#c1f0cf"/><rect x="1077.6" y="822" width="1.0" height="32" fill="#c1f0cf"/><rect x="1079.8" y="822" width="1.0" height="32" fill="#c1f0cf"/><rect x="1081.9" y="822" width="1.0" height="32" fill="#c1f0cf"/><rect x="1104.1" y="822" width="1.0" height="32" fill="#c1f0cf"/><rect x="1106.1" y="822" width="1.0" height="32" fill="#c1f0cf"/><rect x="1108.1" y="822" width="1.0" height="32" fill="#c1f0cf"/><rect x="1110.0" y="822" width="17.0" height="32" fill="#c1f0cf"/><rect x="1099.8" y="822" width="3.1" height="32" fill="#c1f0cf"/><rect x="993.9" y="856" width="11.0" height="32" fill="#c1f0cf"/><rect x="1010.0" y="856" width="5.1" height="32" fill="#c1f0cf"/><rect x="1026.1" y="856" width="12.7" height="32" fill="#c1f0cf"/><rect x="1049.8" y="856" width="3.1" height="32" fill="#c1f0cf"/><rect x="1056.1" y="856" width="4.7" height="32" fill="#c1f0cf"/><rect x="1070.2" y="856" width="2.9" height="32" fill="#c1f0cf"/><rect x="1084.1" y="856" width="9.8" height="32" fill="#c1f0cf"/><rect x="1094.7" y="856" width="2.2" height="32" fill="#c1f0cf"/><rect x="979.8" y="856" width="1.0" height="32" fill="#c1f0cf"/><rect x="981.9" y="856" width="1.0" height="32" fill="#c1f0cf"/><rect x="984.1" y="856" width="1.0" height="32" fill="#c1f0cf"/><rect x="986.1" y="856" width="1.0" height="32" fill="#c1f0cf"/><rect x="988.0" y="856" width="1.0" height="32" fill="#c1f0cf"/><rect x="990.0" y="856" width="1.0" height="32" fill="#c1f0cf"/><rect x="991.7" y="856" width="1.0" height="32" fill="#c1f0cf"/><rect x="1005.6" y="856" width="1.0" height="32" fill="#c1f0cf"/><rect x="1007.8" y="856" width="1.0" height="32" fill="#c1f0cf"/><rect x="1016.3" y="856" width="1.0" height="32" fill="#c1f0cf"/><rect x="1018.0" y="856" width="1.0" height="32" fill="#c1f0cf"/><rect x="1020.0" y="856" width="1.0" height="32" fill="#c1f0cf"/><rect x="1021.9" y="856" width="1.0" height="32" fill="#c1f0cf"/><rect x="1023.9" y="856" width="1.0" height="32" fill="#c1f0cf"/><rect x="1042.0" y="856" width="1.0" height="32" fill="#c1f0cf"/><rect x="1043.7" y="856" width="1.0" height="32" fill="#c1f0cf"/><rect x="1045.9" y="856" width="1.0" height="32" fill="#c1f0cf"/><rect x="1047.6" y="856" width="1.0" height="32" fill="#c1f0cf"/><rect x="1053.6" y="856" width="1.0" height="32" fill="#c1f0cf"/><rect x="1061.7" y="856" width="1.0" height="32" fill="#c1f0cf"/><rect x="1063.7" y="856" width="1.0" height="32" fill="#c1f0cf"/><rect x="1065.8" y="856" width="1.0" height="32" fill="#c1f0cf"/><rect x="1068.0" y="856" width="1.0" height="32" fill="#c1f0cf"/><rect x="1075.9" y="856" width="1.0" height="32" fill="#c1f0cf"/><rect x="1077.6" y="856" width="1.0" height="32" fill="#c1f0cf"/><rect x="1079.8" y="856" width="1.0" height="32" fill="#c1f0cf"/><rect x="1081.9" y="856" width="1.0" height="32" fill="#c1f0cf"/><rect x="1104.1" y="856" width="1.0" height="32" fill="#c1f0cf"/><rect x="1106.1" y="856" width="1.0" height="32" fill="#c1f0cf"/><rect x="1108.1" y="856" width="1.0" height="32" fill="#c1f0cf"/><rect x="1110.0" y="856" width="17.0" height="32" fill="#c1f0cf"/><rect x="993.9" y="890" width="11.0" height="32" fill="#c1f0cf"/><rect x="1010.0" y="890" width="5.1" height="32" fill="#c1f0cf"/><rect x="1026.1" y="890" width="12.7" height="32" fill="#c1f0cf"/><rect x="1049.8" y="890" width="3.1" height="32" fill="#c1f0cf"/><rect x="1056.1" y="890" width="4.7" height="32" fill="#c1f0cf"/><rect x="1070.2" y="890" width="2.9" height="32" fill="#c1f0cf"/><rect x="1084.1" y="890" width="9.8" height="32" fill="#c1f0cf"/><rect x="1094.7" y="890" width="2.2" height="32" fill="#c1f0cf"/><rect x="979.8" y="890" width="1.0" height="32" fill="#c1f0cf"/><rect x="981.9" y="890" width="1.0" height="32" fill="#c1f0cf"/><rect x="984.1" y="890" width="1.0" height="32" fill="#c1f0cf"/><rect x="986.1" y="890" width="1.0" height="32" fill="#c1f0cf"/><rect x="988.0" y="890" width="1.0" height="32" fill="#c1f0cf"/><rect x="990.0" y="890" width="1.0" height="32" fill="#c1f0cf"/><rect x="991.7" y="890" width="1.0" height="32" fill="#c1f0cf"/><rect x="1005.6" y="890" width="1.0" height="32" fill="#c1f0cf"/><rect x="1007.8" y="890" width="1.0" height="32" fill="#c1f0cf"/><rect x="1016.3" y="890" width="1.0" height="32" fill="#c1f0cf"/><rect x="1018.0" y="890" width="1.0" height="32" fill="#c1f0cf"/><rect x="1020.0" y="890" width="1.0" height="32" fill="#c1f0cf"/><rect x="1021.9" y="890" width="1.0" height="32" fill="#c1f0cf"/><rect x="1023.9" y="890" width="1.0" height="32" fill="#c1f0cf"/><rect x="1042.0" y="890" width="1.0" height="32" fill="#c1f0cf"/><rect x="1043.7" y="890" width="1.0" height="32" fill="#c1f0cf"/><rect x="1045.9" y="890" width="1.0" height="32" fill="#c1f0cf"/><rect x="1047.6" y="890" width="1.0" height="32" fill="#c1f0cf"/><rect x="1053.6" y="890" width="1.0" height="32" fill="#c1f0cf"/><rect x="1061.7" y="890" width="1.0" height="32" fill="#c1f0cf"/><rect x="1063.7" y="890" width="1.0" height="32" fill="#c1f0cf"/><rect x="1065.8" y="890" width="1.0" height="32" fill="#c1f0cf"/><rect x="1068.0" y="890" width="1.0" height="32" fill="#c1f0cf"/><rect x="1075.9" y="890" width="1.0" height="32" fill="#c1f0cf"/><rect x="1077.6" y="890" width="1.0" height="32" fill="#c1f0cf"/><rect x="1079.8" y="890" width="1.0" height="32" fill="#c1f0cf"/><rect x="1081.9" y="890" width="1.0" height="32" fill="#c1f0cf"/><rect x="1104.1" y="890" width="1.0" height="32" fill="#c1f0cf"/><rect x="1106.1" y="890" width="1.0" height="32" fill="#c1f0cf"/><rect x="1110.3" y="890" width="1.0" height="32" fill="#c1f0cf"/><rect x="1112.0" y="890" width="1.0" height="32" fill="#c1f0cf"/><rect x="1113.9" y="890" width="13.1" height="32" fill="#c1f0cf"/><rect x="993.9" y="924" width="11.0" height="32" fill="#c1f0cf"/><rect x="1010.0" y="924" width="5.1" height="32" fill="#c1f0cf"/><rect x="1026.1" y="924" width="12.7" height="32" fill="#c1f0cf"/><rect x="1049.8" y="924" width="3.1" height="32" fill="#c1f0cf"/><rect x="1056.1" y="924" width="4.7" height="32" fill="#c1f0cf"/><rect x="1070.2" y="924" width="2.9" height="32" fill="#c1f0cf"/><rect x="1084.1" y="924" width="9.8" height="32" fill="#c1f0cf"/><rect x="1094.7" y="924" width="2.2" height="32" fill="#c1f0cf"/><rect x="979.8" y="924" width="1.0" height="32" fill="#c1f0cf"/><rect x="981.9" y="924" width="1.0" height="32" fill="#c1f0cf"/><rect x="984.1" y="924" width="1.0" height="32" fill="#c1f0cf"/><rect x="986.1" y="924" width="1.0" height="32" fill="#c1f0cf"/><rect x="988.0" y="924" width="1.0" height="32" fill="#c1f0cf"/><rect x="990.0" y="924" width="1.0" height="32" fill="#c1f0cf"/><rect x="991.7" y="924" width="1.0" height="32" fill="#c1f0cf"/><rect x="1005.6" y="924" width="1.0" height="32" fill="#c1f0cf"/><rect x="1007.8" y="924" width="1.0" height="32" fill="#c1f0cf"/><rect x="1016.3" y="924" width="1.0" height="32" fill="#c1f0cf"/><rect x="1018.0" y="924" width="1.0" height="32" fill="#c1f0cf"/><rect x="1020.0" y="924" width="1.0" height="32" fill="#c1f0cf"/><rect x="1021.9" y="924" width="1.0" height="32" fill="#c1f0cf"/><rect x="1023.9" y="924" width="1.0" height="32" fill="#c1f0cf"/><rect x="1042.0" y="924" width="1.0" height="32" fill="#c1f0cf"/><rect x="1043.7" y="924" width="1.0" height="32" fill="#c1f0cf"/><rect x="1045.9" y="924" width="1.0" height="32" fill="#c1f0cf"/><rect x="1047.6" y="924" width="1.0" height="32" fill="#c1f0cf"/><rect x="1053.6" y="924" width="1.0" height="32" fill="#c1f0cf"/><rect x="1061.7" y="924" width="1.0" height="32" fill="#c1f0cf"/><rect x="1063.7" y="924" width="1.0" height="32" fill="#c1f0cf"/><rect x="1065.8" y="924" width="1.0" height="32" fill="#c1f0cf"/><rect x="1068.0" y="924" width="1.0" height="32" fill="#c1f0cf"/><rect x="1075.9" y="924" width="1.0" height="32" fill="#c1f0cf"/><rect x="1077.6" y="924" width="1.0" height="32" fill="#c1f0cf"/><rect x="1079.8" y="924" width="1.0" height="32" fill="#c1f0cf"/><rect x="1081.9" y="924" width="1.0" height="32" fill="#c1f0cf"/><rect x="1104.1" y="924" width="1.0" height="32" fill="#c1f0cf"/><rect x="1106.1" y="924" width="1.0" height="32" fill="#c1f0cf"/><rect x="1108.1" y="924" width="1.0" height="32" fill="#c1f0cf"/><rect x="1110.3" y="924" width="1.0" height="32" fill="#c1f0cf"/><rect x="1112.0" y="924" width="1.0" height="32" fill="#c1f0cf"/><rect x="1113.9" y="924" width="13.1" height="32" fill="#c1f0cf"/><rect x="993.9" y="958" width="11.0" height="32" fill="#c1f0cf"/><rect x="1010.0" y="958" width="5.1" height="32" fill="#c1f0cf"/><rect x="1026.1" y="958" width="12.7" height="32" fill="#c1f0cf"/><rect x="1049.8" y="958" width="3.1" height="32" fill="#c1f0cf"/><rect x="1056.1" y="958" width="4.7" height="32" fill="#c1f0cf"/><rect x="1070.2" y="958" width="2.9" height="32" fill="#c1f0cf"/><rect x="1084.1" y="958" width="9.8" height="32" fill="#c1f0cf"/><rect x="1094.7" y="958" width="2.2" height="32" fill="#c1f0cf"/><rect x="979.8" y="958" width="1.0" height="32" fill="#c1f0cf"/><rect x="981.9" y="958" width="1.0" height="32" fill="#c1f0cf"/><rect x="984.1" y="958" width="1.0" height="32" fill="#c1f0cf"/><rect x="986.1" y="958" width="1.0" height="32" fill="#c1f0cf"/><rect x="988.0" y="958" width="1.0" height="32" fill="#c1f0cf"/><rect x="990.0" y="958" width="1.0" height="32" fill="#c1f0cf"/><rect x="991.7" y="958" width="1.0" height="32" fill="#c1f0cf"/><rect x="1005.6" y="958" width="1.0" height="32" fill="#c1f0cf"/><rect x="1007.8" y="958" width="1.0" height="32" fill="#c1f0cf"/><rect x="1016.3" y="958" width="1.0" height="32" fill="#c1f0cf"/><rect x="1018.0" y="958" width="1.0" height="32" fill="#c1f0cf"/><rect x="1020.0" y="958" width="1.0" height="32" fill="#c1f0cf"/><rect x="1021.9" y="958" width="1.0" height="32" fill="#c1f0cf"/><rect x="1023.9" y="958" width="1.0" height="32" fill="#c1f0cf"/><rect x="1042.0" y="958" width="1.0" height="32" fill="#c1f0cf"/><rect x="1043.7" y="958" width="1.0" height="32" fill="#c1f0cf"/><rect x="1045.9" y="958" width="1.0" height="32" fill="#c1f0cf"/><rect x="1047.6" y="958" width="1.0" height="32" fill="#c1f0cf"/><rect x="1053.6" y="958" width="1.0" height="32" fill="#c1f0cf"/><rect x="1061.7" y="958" width="1.0" height="32" fill="#c1f0cf"/><rect x="1063.7" y="958" width="1.0" height="32" fill="#c1f0cf"/><rect x="1065.8" y="958" width="1.0" height="32" fill="#c1f0cf"/><rect x="1068.0" y="958" width="1.0" height="32" fill="#c1f0cf"/><rect x="1075.9" y="958" width="1.0" height="32" fill="#c1f0cf"/><rect x="1077.6" y="958" width="1.0" height="32" fill="#c1f0cf"/><rect x="1079.8" y="958" width="1.0" height="32" fill="#c1f0cf"/><rect x="1081.9" y="958" width="1.0" height="32" fill="#c1f0cf"/><rect x="1104.1" y="958" width="1.0" height="32" fill="#c1f0cf"/><rect x="1106.1" y="958" width="1.0" height="32" fill="#c1f0cf"/><rect x="1108.1" y="958" width="1.0" height="32" fill="#c1f0cf"/><rect x="1110.3" y="958" width="1.0" height="32" fill="#c1f0cf"/><rect x="1112.0" y="958" width="1.0" height="32" fill="#c1f0cf"/><rect x="1113.7" y="958" width="1.0" height="32" fill="#c1f0cf"/><rect x="1115.9" y="958" width="11.1" height="32" fill="#c1f0cf"/><rect x="993.9" y="992" width="11.0" height="32" fill="#c1f0cf"/><rect x="1010.0" y="992" width="5.1" height="32" fill="#c1f0cf"/><rect x="1026.1" y="992" width="12.7" height="32" fill="#c1f0cf"/><rect x="1049.8" y="992" width="3.1" height="32" fill="#c1f0cf"/><rect x="1056.1" y="992" width="4.7" height="32" fill="#c1f0cf"/><rect x="1070.2" y="992" width="2.9" height="32" fill="#c1f0cf"/><rect x="1084.1" y="992" width="9.8" height="32" fill="#c1f0cf"/><rect x="1094.7" y="992" width="2.2" height="32" fill="#c1f0cf"/><rect x="979.8" y="992" width="1.0" height="32" fill="#c1f0cf"/><rect x="981.9" y="992" width="1.0" height="32" fill="#c1f0cf"/><rect x="984.1" y="992" width="1.0" height="32" fill="#c1f0cf"/><rect x="986.1" y="992" width="1.0" height="32" fill="#c1f0cf"/><rect x="988.0" y="992" width="1.0" height="32" fill="#c1f0cf"/><rect x="990.0" y="992" width="1.0" height="32" fill="#c1f0cf"/><rect x="991.7" y="992" width="1.0" height="32" fill="#c1f0cf"/><rect x="1005.6" y="992" width="1.0" height="32" fill="#c1f0cf"/><rect x="1007.8" y="992" width="1.0" height="32" fill="#c1f0cf"/><rect x="1016.3" y="992" width="1.0" height="32" fill="#c1f0cf"/><rect x="1018.0" y="992" width="1.0" height="32" fill="#c1f0cf"/><rect x="1020.0" y="992" width="1.0" height="32" fill="#c1f0cf"/><rect x="1021.9" y="992" width="1.0" height="32" fill="#c1f0cf"/><rect x="1023.9" y="992" width="1.0" height="32" fill="#c1f0cf"/><rect x="1042.0" y="992" width="1.0" height="32" fill="#c1f0cf"/><rect x="1043.7" y="992" width="1.0" height="32" fill="#c1f0cf"/><rect x="1045.9" y="992" width="1.0" height="32" fill="#c1f0cf"/><rect x="1047.6" y="992" width="1.0" height="32" fill="#c1f0cf"/><rect x="1053.6" y="992" width="1.0" height="32" fill="#c1f0cf"/><rect x="1061.7" y="992" width="1.0" height="32" fill="#c1f0cf"/><rect x="1063.7" y="992" width="1.0" height="32" fill="#c1f0cf"/><rect x="1065.8" y="992" width="1.0" height="32" fill="#c1f0cf"/><rect x="1068.0" y="992" width="1.0" height="32" fill="#c1f0cf"/><rect x="1075.9" y="992" width="1.0" height="32" fill="#c1f0cf"/><rect x="1077.6" y="992" width="1.0" height="32" fill="#c1f0cf"/><rect x="1079.8" y="992" width="1.0" height="32" fill="#c1f0cf"/><rect x="1081.9" y="992" width="1.0" height="32" fill="#c1f0cf"/><rect x="1104.1" y="992" width="1.0" height="32" fill="#c1f0cf"/><rect x="1106.1" y="992" width="1.0" height="32" fill="#c1f0cf"/><rect x="1108.1" y="992" width="1.0" height="32" fill="#c1f0cf"/><rect x="1112.0" y="992" width="1.0" height="32" fill="#c1f0cf"/><rect x="1113.7" y="992" width="1.0" height="32" fill="#c1f0cf"/><rect x="1115.9" y="992" width="11.1" height="32" fill="#c1f0cf"/><rect x="993.9" y="1026" width="11.0" height="4" fill="#c1f0cf"/><rect x="1010.0" y="1026" width="5.1" height="4" fill="#c1f0cf"/><rect x="1026.1" y="1026" width="12.7" height="4" fill="#c1f0cf"/><rect x="1049.8" y="1026" width="3.1" height="4" fill="#c1f0cf"/><rect x="1056.1" y="1026" width="4.7" height="4" fill="#c1f0cf"/><rect x="1070.2" y="1026" width="2.9" height="4" fill="#c1f0cf"/><rect x="1084.1" y="1026" width="9.8" height="4" fill="#c1f0cf"/><rect x="1094.7" y="1026" width="2.2" height="4" fill="#c1f0cf"/><rect x="979.8" y="1026" width="1.0" height="4" fill="#c1f0cf"/><rect x="981.9" y="1026" width="1.0" height="4" fill="#c1f0cf"/><rect x="984.1" y="1026" width="1.0" height="4" fill="#c1f0cf"/><rect x="986.1" y="1026" width="1.0" height="4" fill="#c1f0cf"/><rect x="988.0" y="1026" width="1.0" height="4" fill="#c1f0cf"/><rect x="990.0" y="1026" width="1.0" height="4" fill="#c1f0cf"/><rect x="991.7" y="1026" width="1.0" height="4" fill="#c1f0cf"/><rect x="1005.6" y="1026" width="1.0" height="4" fill="#c1f0cf"/><rect x="1007.8" y="1026" width="1.0" height="4" fill="#c1f0cf"/><rect x="1016.3" y="1026" width="1.0" height="4" fill="#c1f0cf"/><rect x="1018.0" y="1026" width="1.0" height="4" fill="#c1f0cf"/><rect x="1020.0" y="1026" width="1.0" height="4" fill="#c1f0cf"/><rect x="1021.9" y="1026" width="1.0" height="4" fill="#c1f0cf"/><rect x="1023.9" y="1026" width="1.0" height="4" fill="#c1f0cf"/><rect x="1042.0" y="1026" width="1.0" height="4" fill="#c1f0cf"/><rect x="1043.7" y="1026" width="1.0" height="4" fill="#c1f0cf"/><rect x="1045.9" y="1026" width="1.0" height="4" fill="#c1f0cf"/><rect x="1047.6" y="1026" width="1.0" height="4" fill="#c1f0cf"/><rect x="1053.6" y="1026" width="1.0" height="4" fill="#c1f0cf"/><rect x="1061.7" y="1026" width="1.0" height="4" fill="#c1f0cf"/><rect x="1063.7" y="1026" width="1.0" height="4" fill="#c1f0cf"/><rect x="1065.8" y="1026" width="1.0" height="4" fill="#c1f0cf"/><rect x="1068.0" y="1026" width="1.0" height="4" fill="#c1f0cf"/><rect x="1075.9" y="1026" width="1.0" height="4" fill="#c1f0cf"/><rect x="1077.6" y="1026" width="1.0" height="4" fill="#c1f0cf"/><rect x="1079.8" y="1026" width="1.0" height="4" fill="#c1f0cf"/><rect x="1081.9" y="1026" width="1.0" height="4" fill="#c1f0cf"/><rect x="1104.1" y="1026" width="1.0" height="4" fill="#c1f0cf"/><rect x="1115.9" y="1026" width="11.1" height="4" fill="#c1f0cf"/><rect x="988.0" y="754" width="21.0" height="32" fill="#f9cb15"/><rect x="985.4" y="754" width="0.9" height="32" fill="#f9cb15"/><rect x="1040.0" y="754" width="0.9" height="32" fill="#f9cb15"/><rect x="1042.0" y="754" width="0.9" height="32" fill="#f9cb15"/><rect x="1054.4" y="754" width="0.9" height="32" fill="#f9cb15"/><rect x="1068.4" y="754" width="0.9" height="32" fill="#f9cb15"/><rect x="1074.4" y="754" width="0.9" height="32" fill="#f9cb15"/><rect x="1060.5" y="754" width="0.9" height="32" fill="#f9cb15"/><rect x="1020.8" y="754" width="0.9" height="32" fill="#f9cb15"/><rect x="1023.0" y="754" width="0.9" height="32" fill="#f9cb15"/><rect x="1046.0" y="754" width="3.0" height="32" fill="#f9cb15"/><rect x="975.6" y="754" width="1.0" height="32" fill="#c5d5f7"/><rect x="975.6" y="788" width="1.0" height="32" fill="#c5d5f7"/><rect x="977.3" y="754" width="1.0" height="32" fill="#c5d5f7"/><rect x="977.3" y="788" width="1.0" height="32" fill="#c5d5f7"/><rect x="994.0" y="788" width="11.0" height="32" fill="#f9cb15"/><rect x="986.0" y="788" width="1.0" height="32" fill="#f9cb15"/><rect x="1064.0" y="788" width="1.0" height="32" fill="#f9cb15"/><rect x="1006.2" y="788" width="0.8" height="32" fill="#c9c9c9"/><rect x="975.6" y="822" width="1.0" height="32" fill="#c5d5f7"/><rect x="977.3" y="822" width="1.0" height="32" fill="#c5d5f7"/><rect x="975.6" y="856" width="1.0" height="32" fill="#c5d5f7"/><rect x="977.8" y="856" width="1.0" height="32" fill="#f9cb15"/><rect x="975.9" y="890" width="1.0" height="32" fill="#f9cb15"/><rect x="977.8" y="890" width="1.0" height="32" fill="#f9cb15"/><rect x="986.1" y="890" width="1.0" height="32" fill="#c5d5f7"/><rect x="1108.1" y="890" width="1.0" height="32" fill="#c9c9c9"/><rect x="979.8" y="924" width="1.0" height="32" fill="#c5d5f7"/><rect x="986.1" y="924" width="1.0" height="32" fill="#c5d5f7"/><rect x="981.9" y="958" width="1.0" height="32" fill="#f9cb15"/><rect x="1021.9" y="958" width="1.0" height="32" fill="#c5d5f7"/><rect x="1023.9" y="958" width="1.0" height="32" fill="#c5d5f7"/><rect x="1079.8" y="958" width="1.0" height="32" fill="#f9cb15"/><rect x="1081.9" y="958" width="1.0" height="32" fill="#f9cb15"/><rect x="1095.9" y="958" width="1.0" height="32" fill="#f9cb15"/><rect x="981.9" y="992" width="1.0" height="32" fill="#f9cb15"/><rect x="986.1" y="992" width="1.0" height="32" fill="#f9cb15"/><rect x="1021.9" y="992" width="1.0" height="32" fill="#f9cb15"/><rect x="1098.0" y="992" width="1.0" height="32" fill="#f9cb15"/><rect x="1110.0" y="992" width="1.0" height="32" fill="#c9c9c9"/><rect x="1021.9" y="1026" width="1.0" height="4" fill="#f9cb15"/><rect x="1045.9" y="1026" width="1.0" height="4" fill="#f9cb15"/><rect x="1106.1" y="1026" width="1.0" height="4" fill="#c5d5f7"/><rect x="1108.1" y="1026" width="1.0" height="4" fill="#c9c9c9"/><rect x="1112.0" y="1026" width="1.0" height="4" fill="#f9cb15"/><rect x="1115.9" y="1026" width="11.1" height="4" fill="#b9d0f8"/><rect x="1162.0" y="618" width="1.0" height="32" fill="#c1f0cf"/><rect x="1162.0" y="652" width="1.0" height="32" fill="#c1f0cf"/><rect x="1162.0" y="686" width="1.0" height="32" fill="#c1f0cf"/><rect x="1162.0" y="720" width="1.0" height="32" fill="#c1f0cf"/><rect x="1162.0" y="754" width="1.0" height="32" fill="#c1f0cf"/><rect x="1162.0" y="788" width="1.0" height="32" fill="#c1f0cf"/><rect x="1162.0" y="822" width="1.0" height="32" fill="#c1f0cf"/><rect x="1162.0" y="856" width="1.0" height="32" fill="#c1f0cf"/><rect x="1162.0" y="890" width="1.0" height="32" fill="#c1f0cf"/><rect x="1162.0" y="924" width="1.0" height="32" fill="#c1f0cf"/><rect x="1162.0" y="958" width="1.0" height="32" fill="#c1f0cf"/><rect x="1162.0" y="992" width="1.0" height="32" fill="#c1f0cf"/><rect x="1162.0" y="1026" width="1.0" height="4" fill="#c1f0cf"/><rect x="1192.0" y="618" width="3.0" height="32" fill="#c1f0cf"/><rect x="1196.6" y="618" width="1.0" height="32" fill="#c1f0cf"/><rect x="1199.4" y="618" width="1.0" height="32" fill="#c1f0cf"/><rect x="1201.8" y="618" width="0.8" height="32" fill="#dff5e5"/><rect x="1192.0" y="652" width="3.0" height="32" fill="#c1f0cf"/><rect x="1196.6" y="652" width="1.0" height="32" fill="#c1f0cf"/><rect x="1199.4" y="652" width="1.0" height="32" fill="#c1f0cf"/><rect x="1201.8" y="652" width="0.8" height="32" fill="#dff5e5"/><rect x="1192.0" y="686" width="3.0" height="32" fill="#c1f0cf"/><rect x="1196.6" y="686" width="1.0" height="32" fill="#c1f0cf"/><rect x="1199.4" y="686" width="1.0" height="32" fill="#c1f0cf"/><rect x="1201.8" y="686" width="0.8" height="32" fill="#dff5e5"/><rect x="1192.0" y="720" width="3.0" height="32" fill="#c1f0cf"/><rect x="1196.6" y="720" width="1.0" height="32" fill="#c1f0cf"/><rect x="1199.4" y="720" width="1.0" height="32" fill="#c1f0cf"/><rect x="1201.8" y="720" width="0.8" height="32" fill="#dff5e5"/><rect x="1192.0" y="754" width="3.0" height="32" fill="#c1f0cf"/><rect x="1196.6" y="754" width="1.0" height="32" fill="#c1f0cf"/><rect x="1199.4" y="754" width="1.0" height="32" fill="#c1f0cf"/><rect x="1201.8" y="754" width="0.8" height="32" fill="#dff5e5"/><rect x="1192.0" y="788" width="3.0" height="32" fill="#c1f0cf"/><rect x="1196.6" y="788" width="1.0" height="32" fill="#c1f0cf"/><rect x="1199.4" y="788" width="1.0" height="32" fill="#c1f0cf"/><rect x="1201.8" y="788" width="0.8" height="32" fill="#dff5e5"/><rect x="1191.7" y="822" width="1.0" height="32" fill="#c1f0cf"/><rect x="1195.9" y="822" width="1.0" height="32" fill="#c1f0cf"/><rect x="1198.0" y="822" width="1.0" height="32" fill="#c1f0cf"/><rect x="1191.7" y="856" width="1.0" height="32" fill="#c1f0cf"/><rect x="1195.9" y="856" width="1.0" height="32" fill="#c1f0cf"/><rect x="1198.0" y="856" width="1.0" height="32" fill="#c1f0cf"/><rect x="1191.7" y="890" width="1.0" height="32" fill="#c1f0cf"/><rect x="1195.9" y="890" width="1.0" height="32" fill="#c1f0cf"/><rect x="1198.0" y="890" width="1.0" height="32" fill="#c1f0cf"/><rect x="1191.6" y="924" width="1.2" height="32" fill="#f9cb15"/><rect x="1193.8" y="924" width="1.2" height="32" fill="#f9cb15"/><rect x="1195.8" y="924" width="1.2" height="32" fill="#f9cb15"/><rect x="1198.0" y="958" width="1.0" height="32" fill="#c1f0cf"/><rect x="1198.0" y="992" width="1.0" height="32" fill="#c1f0cf"/><rect x="1198.0" y="1026" width="1.0" height="4" fill="#c1f0cf"/><rect x="1204.0" y="618" width="1.0" height="32" fill="#f9cb15"/><rect x="1193.8" y="754" width="1.0" height="32" fill="#f9cb15"/><rect x="1193.0" y="788" width="1.0" height="32" fill="#c5d5f7"/><rect x="1198.2" y="788" width="0.8" height="32" fill="#c5d5f7"/><rect x="1204.1" y="822" width="1.0" height="32" fill="#f9cb15"/><rect x="1206.3" y="618" width="322.4" height="32" fill="#b9f5df"/><rect x="1206.3" y="652" width="322.4" height="32" fill="#c0ecf1"/><rect x="1206.3" y="686" width="46.7" height="32" fill="#c0ecf1"/><rect x="1254.0" y="686" width="274.7" height="32" fill="#c0ecf1"/><rect x="1206.3" y="720" width="46.7" height="32" fill="#f9cb15"/><rect x="1254.0" y="720" width="274.7" height="32" fill="#c0ecf1"/><rect x="1206.3" y="754" width="34.7" height="32" fill="#c1f0cf"/><rect x="1254.5" y="754" width="274.2" height="32" fill="#c1f0cf"/><rect x="1243.0" y="754" width="1.2" height="32" fill="#c1f0cf"/><rect x="1245.4" y="754" width="1.2" height="32" fill="#c1f0cf"/><rect x="1247.8" y="754" width="1.2" height="32" fill="#c1f0cf"/><rect x="1250.2" y="754" width="1.2" height="32" fill="#c1f0cf"/><rect x="1206.3" y="788" width="34.7" height="32" fill="#c1f0cf"/><rect x="1254.5" y="788" width="274.2" height="32" fill="#c1f0cf"/><rect x="1243.0" y="788" width="1.2" height="32" fill="#c1f0cf"/><rect x="1245.4" y="788" width="1.2" height="32" fill="#c1f0cf"/><rect x="1247.8" y="788" width="1.2" height="32" fill="#c1f0cf"/><rect x="1250.2" y="788" width="1.2" height="32" fill="#c1f0cf"/><rect x="1206.3" y="822" width="34.7" height="32" fill="#c1f0cf"/><rect x="1254.5" y="822" width="274.2" height="32" fill="#c1f0cf"/><rect x="1243.0" y="822" width="1.2" height="32" fill="#c1f0cf"/><rect x="1245.4" y="822" width="1.2" height="32" fill="#c1f0cf"/><rect x="1247.8" y="822" width="1.2" height="32" fill="#c1f0cf"/><rect x="1250.2" y="822" width="1.2" height="32" fill="#c1f0cf"/><rect x="1206.3" y="856" width="34.7" height="32" fill="#c1f0cf"/><rect x="1254.5" y="856" width="274.2" height="32" fill="#c1f0cf"/><rect x="1243.0" y="856" width="1.2" height="32" fill="#c1f0cf"/><rect x="1245.4" y="856" width="1.2" height="32" fill="#c1f0cf"/><rect x="1247.8" y="856" width="1.2" height="32" fill="#c1f0cf"/><rect x="1250.2" y="856" width="1.2" height="32" fill="#c1f0cf"/><rect x="1206.3" y="890" width="34.7" height="32" fill="#c1f0cf"/><rect x="1254.5" y="890" width="274.2" height="32" fill="#c1f0cf"/><rect x="1243.0" y="890" width="1.2" height="32" fill="#c1f0cf"/><rect x="1245.4" y="890" width="1.2" height="32" fill="#c1f0cf"/><rect x="1247.8" y="890" width="1.2" height="32" fill="#c1f0cf"/><rect x="1250.2" y="890" width="1.2" height="32" fill="#c1f0cf"/><rect x="1206.3" y="924" width="34.7" height="32" fill="#c1f0cf"/><rect x="1254.5" y="924" width="274.2" height="32" fill="#c1f0cf"/><rect x="1243.0" y="924" width="1.2" height="32" fill="#c1f0cf"/><rect x="1245.4" y="924" width="1.2" height="32" fill="#c1f0cf"/><rect x="1247.8" y="924" width="1.2" height="32" fill="#c1f0cf"/><rect x="1250.2" y="924" width="1.2" height="32" fill="#c1f0cf"/><rect x="1206.3" y="958" width="34.7" height="32" fill="#c1f0cf"/><rect x="1254.5" y="958" width="274.2" height="32" fill="#c1f0cf"/><rect x="1243.0" y="958" width="1.2" height="32" fill="#c1f0cf"/><rect x="1245.4" y="958" width="1.2" height="32" fill="#c1f0cf"/><rect x="1247.8" y="958" width="1.2" height="32" fill="#c1f0cf"/><rect x="1250.2" y="958" width="1.2" height="32" fill="#c1f0cf"/><rect x="1206.3" y="992" width="34.7" height="32" fill="#c1f0cf"/><rect x="1254.5" y="992" width="274.2" height="32" fill="#c1f0cf"/><rect x="1243.0" y="992" width="1.2" height="32" fill="#c1f0cf"/><rect x="1245.4" y="992" width="1.2" height="32" fill="#c1f0cf"/><rect x="1247.8" y="992" width="1.2" height="32" fill="#c1f0cf"/><rect x="1250.2" y="992" width="1.2" height="32" fill="#c1f0cf"/><rect x="1206.3" y="1026" width="34.7" height="4" fill="#c1f0cf"/><rect x="1254.5" y="1026" width="274.2" height="4" fill="#c1f0cf"/><rect x="1243.0" y="1026" width="1.2" height="4" fill="#c1f0cf"/><rect x="1245.4" y="1026" width="1.2" height="4" fill="#c1f0cf"/><rect x="1247.8" y="1026" width="1.2" height="4" fill="#c1f0cf"/><rect x="1250.2" y="1026" width="1.2" height="4" fill="#c1f0cf"/><rect x="1532.4" y="618" width="24.3" height="32" fill="#f9cb15"/><rect x="1558.0" y="618" width="10.6" height="32" fill="#f9cb15"/><rect x="1569.6" y="618" width="0.8" height="32" fill="#c9c9c9"/><rect x="1572.0" y="618" width="9.0" height="32" fill="#c1f0cf"/><rect x="1534.0" y="652" width="23.0" height="32" fill="#c1f0cf"/><rect x="1558.5" y="652" width="10.5" height="32" fill="#c1f0cf"/><rect x="1572.0" y="652" width="9.0" height="32" fill="#c1f0cf"/><rect x="1530.6" y="652" width="0.8" height="32" fill="#c9d8f8"/><rect x="1534.0" y="686" width="23.0" height="32" fill="#c1f0cf"/><rect x="1558.5" y="686" width="10.5" height="32" fill="#c1f0cf"/><rect x="1572.0" y="686" width="9.0" height="32" fill="#c1f0cf"/><rect x="1530.6" y="686" width="0.8" height="32" fill="#c9d8f8"/><rect x="1534.0" y="720" width="23.0" height="32" fill="#c1f0cf"/><rect x="1558.5" y="720" width="10.5" height="32" fill="#c1f0cf"/><rect x="1572.0" y="720" width="9.0" height="32" fill="#c1f0cf"/><rect x="1530.6" y="720" width="0.8" height="32" fill="#c9d8f8"/><rect x="1534.0" y="720" width="19.0" height="32" fill="#c1f0cf"/><rect x="1530.0" y="754" width="1.0" height="32" fill="#c5d5f7"/><rect x="1534.0" y="754" width="3.0" height="32" fill="#c1f0cf"/><rect x="1540.4" y="754" width="2.8" height="32" fill="#c1f0cf"/><rect x="1544.6" y="754" width="7.4" height="32" fill="#c1f0cf"/><rect x="1562.4" y="754" width="6.9" height="32" fill="#c1f0cf"/><rect x="1572.3" y="754" width="8.6" height="32" fill="#c1f0cf"/><rect x="1553.1" y="754" width="1.0" height="32" fill="#c1f0cf"/><rect x="1555.0" y="754" width="1.0" height="32" fill="#c1f0cf"/><rect x="1570.0" y="754" width="1.0" height="32" fill="#c1f0cf"/><rect x="1557.1" y="754" width="3.5" height="32" fill="#c1f0cf"/><rect x="1563.8" y="754" width="0.8" height="32" fill="#e3f7e8"/><rect x="1565.7" y="754" width="0.8" height="32" fill="#e3f7e8"/><rect x="1567.3" y="754" width="0.8" height="32" fill="#e3f7e8"/><rect x="1530.0" y="788" width="1.0" height="32" fill="#c5d5f7"/><rect x="1534.0" y="788" width="3.0" height="32" fill="#c1f0cf"/><rect x="1540.4" y="788" width="2.8" height="32" fill="#c1f0cf"/><rect x="1544.6" y="788" width="7.4" height="32" fill="#c1f0cf"/><rect x="1562.4" y="788" width="6.9" height="32" fill="#c1f0cf"/><rect x="1572.3" y="788" width="8.6" height="32" fill="#c1f0cf"/><rect x="1553.1" y="788" width="1.0" height="32" fill="#c1f0cf"/><rect x="1555.0" y="788" width="1.0" height="32" fill="#c1f0cf"/><rect x="1570.0" y="788" width="1.0" height="32" fill="#c1f0cf"/><rect x="1557.1" y="788" width="3.5" height="32" fill="#c1f0cf"/><rect x="1563.8" y="788" width="0.8" height="32" fill="#e3f7e8"/><rect x="1565.7" y="788" width="0.8" height="32" fill="#e3f7e8"/><rect x="1567.3" y="788" width="0.8" height="32" fill="#e3f7e8"/><rect x="1530.0" y="822" width="1.0" height="32" fill="#c5d5f7"/><rect x="1534.0" y="822" width="3.0" height="32" fill="#c1f0cf"/><rect x="1540.4" y="822" width="2.8" height="32" fill="#c1f0cf"/><rect x="1544.6" y="822" width="7.4" height="32" fill="#c1f0cf"/><rect x="1562.4" y="822" width="6.9" height="32" fill="#c1f0cf"/><rect x="1572.3" y="822" width="8.6" height="32" fill="#c1f0cf"/><rect x="1553.1" y="822" width="1.0" height="32" fill="#c1f0cf"/><rect x="1555.0" y="822" width="1.0" height="32" fill="#c1f0cf"/><rect x="1570.0" y="822" width="1.0" height="32" fill="#c1f0cf"/><rect x="1557.1" y="822" width="3.5" height="32" fill="#c1f0cf"/><rect x="1563.8" y="822" width="0.8" height="32" fill="#e3f7e8"/><rect x="1565.7" y="822" width="0.8" height="32" fill="#e3f7e8"/><rect x="1567.3" y="822" width="0.8" height="32" fill="#e3f7e8"/><rect x="1530.0" y="856" width="1.0" height="32" fill="#c5d5f7"/><rect x="1534.0" y="856" width="3.0" height="32" fill="#c1f0cf"/><rect x="1540.4" y="856" width="2.8" height="32" fill="#c1f0cf"/><rect x="1544.6" y="856" width="7.4" height="32" fill="#c1f0cf"/><rect x="1562.4" y="856" width="6.9" height="32" fill="#c1f0cf"/><rect x="1572.3" y="856" width="8.6" height="32" fill="#c1f0cf"/><rect x="1553.1" y="856" width="1.0" height="32" fill="#c1f0cf"/><rect x="1555.0" y="856" width="1.0" height="32" fill="#c1f0cf"/><rect x="1570.0" y="856" width="1.0" height="32" fill="#c1f0cf"/><rect x="1563.8" y="856" width="0.8" height="32" fill="#e3f7e8"/><rect x="1565.7" y="856" width="0.8" height="32" fill="#e3f7e8"/><rect x="1567.3" y="856" width="0.8" height="32" fill="#e3f7e8"/><rect x="1530.0" y="890" width="1.0" height="32" fill="#c5d5f7"/><rect x="1534.0" y="890" width="3.0" height="32" fill="#c1f0cf"/><rect x="1540.4" y="890" width="2.8" height="32" fill="#c1f0cf"/><rect x="1544.6" y="890" width="7.4" height="32" fill="#c1f0cf"/><rect x="1562.4" y="890" width="6.9" height="32" fill="#c1f0cf"/><rect x="1572.3" y="890" width="8.6" height="32" fill="#c1f0cf"/><rect x="1553.1" y="890" width="1.0" height="32" fill="#c1f0cf"/><rect x="1555.0" y="890" width="1.0" height="32" fill="#c1f0cf"/><rect x="1570.0" y="890" width="1.0" height="32" fill="#c1f0cf"/><rect x="1563.8" y="890" width="0.8" height="32" fill="#e3f7e8"/><rect x="1565.7" y="890" width="0.8" height="32" fill="#e3f7e8"/><rect x="1567.3" y="890" width="0.8" height="32" fill="#e3f7e8"/><rect x="1530.0" y="924" width="1.0" height="32" fill="#c5d5f7"/><rect x="1534.0" y="924" width="3.0" height="32" fill="#c1f0cf"/><rect x="1540.4" y="924" width="2.8" height="32" fill="#c1f0cf"/><rect x="1544.6" y="924" width="7.4" height="32" fill="#c1f0cf"/><rect x="1562.4" y="924" width="6.9" height="32" fill="#c1f0cf"/><rect x="1572.3" y="924" width="8.6" height="32" fill="#c1f0cf"/><rect x="1553.1" y="924" width="1.0" height="32" fill="#c1f0cf"/><rect x="1555.0" y="924" width="1.0" height="32" fill="#c1f0cf"/><rect x="1570.0" y="924" width="1.0" height="32" fill="#c1f0cf"/><rect x="1563.8" y="924" width="0.8" height="32" fill="#e3f7e8"/><rect x="1565.7" y="924" width="0.8" height="32" fill="#e3f7e8"/><rect x="1567.3" y="924" width="0.8" height="32" fill="#e3f7e8"/><rect x="1530.0" y="958" width="1.0" height="32" fill="#c5d5f7"/><rect x="1534.0" y="958" width="3.0" height="32" fill="#c1f0cf"/><rect x="1540.4" y="958" width="2.8" height="32" fill="#c1f0cf"/><rect x="1544.6" y="958" width="7.4" height="32" fill="#c1f0cf"/><rect x="1562.4" y="958" width="6.9" height="32" fill="#c1f0cf"/><rect x="1572.3" y="958" width="8.6" height="32" fill="#c1f0cf"/><rect x="1553.1" y="958" width="1.0" height="32" fill="#c1f0cf"/><rect x="1555.0" y="958" width="1.0" height="32" fill="#c1f0cf"/><rect x="1570.0" y="958" width="1.0" height="32" fill="#c1f0cf"/><rect x="1557.1" y="958" width="3.5" height="32" fill="#c1f0cf"/><rect x="1563.8" y="958" width="0.8" height="32" fill="#e3f7e8"/><rect x="1565.7" y="958" width="0.8" height="32" fill="#e3f7e8"/><rect x="1567.3" y="958" width="0.8" height="32" fill="#e3f7e8"/><rect x="1530.0" y="992" width="1.0" height="32" fill="#c5d5f7"/><rect x="1534.0" y="992" width="3.0" height="32" fill="#c1f0cf"/><rect x="1540.4" y="992" width="2.8" height="32" fill="#c1f0cf"/><rect x="1544.6" y="992" width="7.4" height="32" fill="#c1f0cf"/><rect x="1562.4" y="992" width="6.9" height="32" fill="#c1f0cf"/><rect x="1572.3" y="992" width="8.6" height="32" fill="#c1f0cf"/><rect x="1553.1" y="992" width="1.0" height="32" fill="#c1f0cf"/><rect x="1555.0" y="992" width="1.0" height="32" fill="#c1f0cf"/><rect x="1570.0" y="992" width="1.0" height="32" fill="#c1f0cf"/><rect x="1557.1" y="992" width="3.5" height="32" fill="#c1f0cf"/><rect x="1563.8" y="992" width="0.8" height="32" fill="#e3f7e8"/><rect x="1565.7" y="992" width="0.8" height="32" fill="#e3f7e8"/><rect x="1567.3" y="992" width="0.8" height="32" fill="#e3f7e8"/><rect x="1530.0" y="1026" width="1.0" height="4" fill="#c5d5f7"/><rect x="1534.0" y="1026" width="3.0" height="4" fill="#c1f0cf"/><rect x="1540.4" y="1026" width="2.8" height="4" fill="#c1f0cf"/><rect x="1544.6" y="1026" width="7.4" height="4" fill="#c1f0cf"/><rect x="1562.4" y="1026" width="6.9" height="4" fill="#c1f0cf"/><rect x="1572.3" y="1026" width="8.6" height="4" fill="#c1f0cf"/><rect x="1553.1" y="1026" width="1.0" height="4" fill="#c1f0cf"/><rect x="1555.0" y="1026" width="1.0" height="4" fill="#c1f0cf"/><rect x="1570.0" y="1026" width="1.0" height="4" fill="#c1f0cf"/><rect x="1557.1" y="1026" width="3.5" height="4" fill="#c1f0cf"/><rect x="1563.8" y="1026" width="0.8" height="4" fill="#e3f7e8"/><rect x="1565.7" y="1026" width="0.8" height="4" fill="#e3f7e8"/><rect x="1567.3" y="1026" width="0.8" height="4" fill="#e3f7e8"/><rect x="1538.1" y="754" width="1.0" height="32" fill="#f9cb15"/><rect x="1560.1" y="788" width="1.0" height="32" fill="#f9cb15"/><rect x="1530.0" y="856" width="1.0" height="32" fill="#f9cb15"/><rect x="1538.1" y="856" width="1.0" height="32" fill="#f9cb15"/><rect x="1530.0" y="890" width="1.0" height="32" fill="#f9cb15"/><rect x="1570.0" y="958" width="1.0" height="32" fill="#f9cb15"/><rect x="1565.8" y="1026" width="1.0" height="4" fill="#f9cb15"/><rect x="1531.9" y="822" width="1.0" height="32" fill="#c5d5f7"/><rect x="1549.9" y="822" width="1.0" height="32" fill="#c5d5f7"/><rect x="1531.9" y="856" width="1.0" height="32" fill="#c5d5f7"/><rect x="1549.9" y="856" width="1.0" height="32" fill="#c5d5f7"/><rect x="1574.0" y="1026" width="7.0" height="4" fill="#b9d0f8"/><rect x="1626.0" y="618" width="1.0" height="32" fill="#c1f0cf"/><rect x="1630.0" y="618" width="15.0" height="32" fill="#c1f0cf"/><rect x="1655.0" y="618" width="0.8" height="32" fill="#eaf6ec"/><rect x="1658.0" y="618" width="0.8" height="32" fill="#efe9df"/><rect x="1626.0" y="652" width="1.0" height="32" fill="#c1f0cf"/><rect x="1630.0" y="652" width="15.0" height="32" fill="#c1f0cf"/><rect x="1655.0" y="652" width="0.8" height="32" fill="#eaf6ec"/><rect x="1658.0" y="652" width="0.8" height="32" fill="#efe9df"/><rect x="1626.0" y="686" width="1.0" height="32" fill="#c1f0cf"/><rect x="1630.0" y="686" width="15.0" height="32" fill="#c1f0cf"/><rect x="1655.0" y="686" width="0.8" height="32" fill="#eaf6ec"/><rect x="1658.0" y="686" width="0.8" height="32" fill="#efe9df"/><rect x="1626.0" y="720" width="1.0" height="32" fill="#c1f0cf"/><rect x="1630.0" y="720" width="15.0" height="32" fill="#c1f0cf"/><rect x="1655.0" y="720" width="0.8" height="32" fill="#eaf6ec"/><rect x="1658.0" y="720" width="0.8" height="32" fill="#efe9df"/><rect x="1646.2" y="618" width="1.0" height="32" fill="#f9cb15"/><rect x="1628.0" y="720" width="1.0" height="32" fill="#c1f0cf"/><rect x="1633.6" y="720" width="1.0" height="32" fill="#f9cb15"/><rect x="1627.8" y="754" width="1.0" height="32" fill="#c1f0cf"/><rect x="1631.7" y="754" width="1.0" height="32" fill="#c1f0cf"/><rect x="1644.4" y="754" width="1.0" height="32" fill="#c1f0cf"/><rect x="1645.8" y="754" width="1.0" height="32" fill="#c1f0cf"/><rect x="1638.7" y="754" width="4.6" height="32" fill="#c1f0cf"/><rect x="1656.1" y="754" width="0.8" height="32" fill="#f1ece2"/><rect x="1657.9" y="754" width="0.8" height="32" fill="#f1ece2"/><rect x="1627.8" y="788" width="1.0" height="32" fill="#c1f0cf"/><rect x="1631.7" y="788" width="1.0" height="32" fill="#c1f0cf"/><rect x="1644.4" y="788" width="1.0" height="32" fill="#c1f0cf"/><rect x="1645.8" y="788" width="1.0" height="32" fill="#c1f0cf"/><rect x="1638.7" y="788" width="4.6" height="32" fill="#c1f0cf"/><rect x="1656.1" y="788" width="0.8" height="32" fill="#f1ece2"/><rect x="1657.9" y="788" width="0.8" height="32" fill="#f1ece2"/><rect x="1627.8" y="822" width="1.0" height="32" fill="#c1f0cf"/><rect x="1631.7" y="822" width="1.0" height="32" fill="#c1f0cf"/><rect x="1644.4" y="822" width="1.0" height="32" fill="#c1f0cf"/><rect x="1645.8" y="822" width="1.0" height="32" fill="#c1f0cf"/><rect x="1638.7" y="822" width="4.6" height="32" fill="#c1f0cf"/><rect x="1656.1" y="822" width="0.8" height="32" fill="#f1ece2"/><rect x="1657.9" y="822" width="0.8" height="32" fill="#f1ece2"/><rect x="1627.8" y="856" width="1.0" height="32" fill="#c1f0cf"/><rect x="1631.7" y="856" width="1.0" height="32" fill="#c1f0cf"/><rect x="1644.4" y="856" width="1.0" height="32" fill="#c1f0cf"/><rect x="1645.8" y="856" width="1.0" height="32" fill="#c1f0cf"/><rect x="1638.7" y="856" width="4.6" height="32" fill="#c1f0cf"/><rect x="1656.1" y="856" width="0.8" height="32" fill="#f1ece2"/><rect x="1657.9" y="856" width="0.8" height="32" fill="#f1ece2"/><rect x="1627.8" y="890" width="1.0" height="32" fill="#c1f0cf"/><rect x="1631.7" y="890" width="1.0" height="32" fill="#c1f0cf"/><rect x="1644.4" y="890" width="1.0" height="32" fill="#c1f0cf"/><rect x="1645.8" y="890" width="1.0" height="32" fill="#c1f0cf"/><rect x="1638.7" y="890" width="4.6" height="32" fill="#c1f0cf"/><rect x="1656.1" y="890" width="0.8" height="32" fill="#f1ece2"/><rect x="1657.9" y="890" width="0.8" height="32" fill="#f1ece2"/><rect x="1627.8" y="924" width="1.0" height="32" fill="#c1f0cf"/><rect x="1631.7" y="924" width="1.0" height="32" fill="#c1f0cf"/><rect x="1644.4" y="924" width="1.0" height="32" fill="#c1f0cf"/><rect x="1645.8" y="924" width="1.0" height="32" fill="#c1f0cf"/><rect x="1638.7" y="924" width="4.6" height="32" fill="#c1f0cf"/><rect x="1656.1" y="924" width="0.8" height="32" fill="#f1ece2"/><rect x="1657.9" y="924" width="0.8" height="32" fill="#f1ece2"/><rect x="1627.8" y="958" width="1.0" height="32" fill="#c1f0cf"/><rect x="1631.7" y="958" width="1.0" height="32" fill="#c1f0cf"/><rect x="1644.4" y="958" width="1.0" height="32" fill="#c1f0cf"/><rect x="1645.8" y="958" width="1.0" height="32" fill="#c1f0cf"/><rect x="1638.7" y="958" width="4.6" height="32" fill="#c1f0cf"/><rect x="1627.8" y="992" width="1.0" height="32" fill="#c1f0cf"/><rect x="1631.7" y="992" width="1.0" height="32" fill="#c1f0cf"/><rect x="1644.4" y="992" width="1.0" height="32" fill="#c1f0cf"/><rect x="1645.8" y="992" width="1.0" height="32" fill="#c1f0cf"/><rect x="1638.7" y="992" width="4.6" height="32" fill="#c1f0cf"/><rect x="1627.8" y="1026" width="1.0" height="4" fill="#c1f0cf"/><rect x="1631.7" y="1026" width="1.0" height="4" fill="#c1f0cf"/><rect x="1644.4" y="1026" width="1.0" height="4" fill="#c1f0cf"/><rect x="1645.8" y="1026" width="1.0" height="4" fill="#c1f0cf"/><rect x="1638.7" y="1026" width="4.6" height="4" fill="#c1f0cf"/><rect x="1625.9" y="754" width="1.0" height="32" fill="#f9cb15"/><rect x="1633.5" y="754" width="1.0" height="32" fill="#d694f8"/><rect x="1625.9" y="788" width="1.0" height="32" fill="#c1f0cf"/><rect x="1635.9" y="788" width="1.0" height="32" fill="#c5d5f7"/><rect x="1643.9" y="788" width="1.0" height="32" fill="#c5d5f7"/><rect x="1643.9" y="822" width="1.0" height="32" fill="#c5d5f7"/><rect x="1643.9" y="856" width="1.0" height="32" fill="#d694f8"/><rect x="1627.8" y="924" width="1.0" height="32" fill="#f9cb15"/><rect x="1664.0" y="618" width="133.2" height="32" fill="#b9f5df"/><rect x="1664.0" y="652" width="133.2" height="32" fill="#c0ecf1"/><rect x="1664.0" y="686" width="133.2" height="32" fill="#c0ecf1"/><rect x="1664.0" y="720" width="133.2" height="32" fill="#c0ecf1"/><rect x="1664.0" y="754" width="133.2" height="32" fill="#c1f0cf"/><rect x="1664.0" y="788" width="133.2" height="32" fill="#c1f0cf"/><rect x="1664.0" y="822" width="133.2" height="32" fill="#c1f0cf"/><rect x="1664.0" y="856" width="133.2" height="32" fill="#c1f0cf"/><rect x="1664.0" y="890" width="133.2" height="32" fill="#c1f0cf"/><rect x="1664.0" y="924" width="133.2" height="32" fill="#c1f0cf"/><rect x="1664.0" y="958" width="133.2" height="32" fill="#c1f0cf"/><rect x="1664.0" y="992" width="133.2" height="32" fill="#c1f0cf"/><rect x="1664.0" y="1026" width="133.2" height="4" fill="#c1f0cf"/><rect x="112" y="478.4" width="4" height="552" fill="#3b78e7"/><rect x="112" y="478.4" width="19.7" height="3.8" fill="#3b78e7"/><rect x="112" y="565.8" width="28" height="2" fill="#8a4a4c"/><path d="M134.4 561L146.4 566.8L134.4 572.6Z" fill="#7b4a52" shape-rendering="auto"/><rect x="194.1" y="410" width="1.8" height="620" fill="#6d95e8" opacity=".17"/><rect x="374.1" y="410" width="1.8" height="620" fill="#6d95e8" opacity=".17"/><rect x="554.1" y="410" width="1.8" height="620" fill="#6d95e8" opacity=".17"/><rect x="734.1" y="410" width="1.8" height="620" fill="#6d95e8" opacity=".17"/><rect x="914.7" y="410" width="1.8" height="620" fill="#6d95e8" opacity=".17"/><rect x="1096.1" y="410" width="1.8" height="620" fill="#6d95e8" opacity=".17"/><rect x="1276.1" y="410" width="1.8" height="620" fill="#6d95e8" opacity=".17"/><rect x="1456.1" y="410" width="1.8" height="620" fill="#6d95e8" opacity=".17"/><rect x="1636.1" y="410" width="1.8" height="620" fill="#6d95e8" opacity=".17"/><path d="M126 453L139.6 460.4L126 467.8Z" fill="#808080"/><path d="M124.5 492.4H140L132.25 505.8Z" fill="#808080"/><rect x="1800" y="416" width="15.6" height="44" rx="7.8" fill="#b9b9b9"/><rect x="1800" y="484" width="15.6" height="30" rx="7.8" fill="#b9b9b9"/></svg>
<svg style="left:128px;top:142px" width="32" height="32" viewBox="128 142 32 32"><rect x="129.95" y="143.95" width="2.7" height="2.7" fill="#474747"/><rect x="136.15" y="143.95" width="2.7" height="2.7" fill="#474747"/><rect x="142.35" y="143.95" width="2.7" height="2.7" fill="#474747"/><rect x="148.55" y="143.95" width="2.7" height="2.7" fill="#474747"/><rect x="155.35" y="143.95" width="2.7" height="2.7" fill="#474747"/><rect x="129.95" y="150.15" width="2.7" height="2.7" fill="#474747"/><rect x="129.95" y="156.55" width="2.7" height="2.7" fill="#474747"/><rect x="129.95" y="162.95" width="2.7" height="2.7" fill="#474747"/><rect x="129.95" y="169.25" width="2.7" height="2.7" fill="#474747"/><rect x="136.15" y="169.25" width="2.7" height="2.7" fill="#474747"/><rect x="155.35" y="150.15" width="2.7" height="2.7" fill="#474747"/><path d="M158.1 157.7H143.9V171.9M144.6 158.4L157 170.8" fill="none" stroke="#474747" stroke-width="2.7"/></svg>
<svg style="left:182px;top:142px" width="36" height="32" viewBox="182 142 36 32"><path d="M214 147.4H189.7V166.5" fill="none" stroke="#474747" stroke-width="2.8"/><rect x="184" y="166.2" width="16" height="3.7" fill="#474747"/><rect x="205.4" y="153.7" width="9.3" height="14.8" rx="1.4" fill="none" stroke="#474747" stroke-width="2.8"/></svg>
<svg style="left:1336px;top:146px" width="28" height="24" viewBox="1336 146 28 24"><path d="M1339.8 149.7L1348.1 158L1339.8 166.2M1351.9 149.7L1360 158L1351.9 166.2" fill="none" stroke="#5f5f5f" stroke-width="3" /></svg>
<svg style="left:1528px;top:146px" width="30" height="26" viewBox="1528 146 30 26"><path d="M1543 149.2L1555.8 169.8H1530.2Z" fill="#e8702e" stroke="#e8702e" stroke-width="1" stroke-linejoin="round"/><rect x="1541.7" y="156" width="2.6" height="7.6" fill="#fff"/><circle cx="1543" cy="166.2" r="1.5" fill="#fff"/></svg>
<svg style="left:1626px;top:149px" width="26" height="24" viewBox="1626 149 26 24"><path d="M1629.6 151.4H1647.2Q1648.6 151.4 1648.6 152.8V166.3Q1648.6 167.7 1647.2 167.7H1632.4L1628.2 171.2V152.8Q1628.2 151.4 1629.6 151.4Z" fill="#dc362e"/><path d="M1635.4 156.6L1641.6 162.8M1641.6 156.6L1635.4 162.8" stroke="#fff" stroke-width="1.9" fill="none"/></svg>
<svg style="left:1715px;top:141px" width="34" height="34" viewBox="1715 141 34 34"><path d="M1729.07 148.54L1729.28 144.57L1734.72 144.57L1734.93 148.54L1738.73 150.74L1742.27 148.93L1744.99 153.64L1741.65 155.80L1741.65 160.20L1744.99 162.36L1742.27 167.07L1738.73 165.26L1734.93 167.46L1734.72 171.43L1729.28 171.43L1729.07 167.46L1725.27 165.26L1721.73 167.07L1719.01 162.36L1722.35 160.20L1722.35 155.80L1719.01 153.64L1721.73 148.93L1725.27 150.74Z" fill="none" stroke="#474747" stroke-width="2.8" stroke-linejoin="round"/><circle cx="1732" cy="158" r="5" fill="#474747"/></svg>
<svg style="left:1767px;top:195px" width="34" height="34" viewBox="1767 195 34 34"><path d="M1781.07 202.54L1781.28 198.57L1786.72 198.57L1786.93 202.54L1790.73 204.74L1794.27 202.93L1796.99 207.64L1793.65 209.80L1793.65 214.20L1796.99 216.36L1794.27 221.07L1790.73 219.26L1786.93 221.46L1786.72 225.43L1781.28 225.43L1781.07 221.46L1777.27 219.26L1773.73 221.07L1771.01 216.36L1774.35 214.20L1774.35 209.80L1771.01 207.64L1773.73 202.93L1777.27 204.74Z" fill="none" stroke="#474747" stroke-width="2.8" stroke-linejoin="round"/><circle cx="1784" cy="212" r="5" fill="#474747"/></svg>
<div style="position:absolute;left:1785px;top:145.7px;width:6px;height:6px;border-radius:50%;background:#474747"></div>
<div style="position:absolute;left:1785px;top:155px;width:6px;height:6px;border-radius:50%;background:#474747"></div>
<div style="position:absolute;left:1785px;top:164.2px;width:6px;height:6px;border-radius:50%;background:#474747"></div>
<svg style="left:128px;top:196px" width="32" height="32" viewBox="128 196 32 32"><circle cx="144" cy="212" r="13.3" fill="none" stroke="#474747" stroke-width="2.8"/><circle cx="144" cy="212" r="8.1" fill="#474747"/></svg>
<svg style="left:184px;top:194px" width="34" height="34" viewBox="184 194 34 34"><path d="M209.42 204.09A12.3 12.3 0 1 0 212.27 212.86" fill="none" stroke="#474747" stroke-width="2.8"/><path d="M212.4 197.8V206.3H204" fill="none" stroke="#474747" stroke-width="2.8"/></svg>
<svg style="left:240px;top:196px" width="32" height="32" viewBox="240 196 32 32"><circle cx="256" cy="212" r="13.3" fill="none" stroke="#474747" stroke-width="2.8"/><path d="M246.6 221.2L265.4 202.6" stroke="#474747" stroke-width="2.8"/></svg>
<svg style="left:316px;top:196px" width="28" height="30" viewBox="316 196 28 30"><path d="M319.4 218V220.4Q319.4 222.4 321.4 222.4H338.6Q340.6 222.4 340.6 220.4V218" fill="none" stroke="#474747" stroke-width="2.9"/><path d="M330 217.8V200.5M323.2 207.3L330 200.3L336.8 207.3" fill="none" stroke="#474747" stroke-width="2.9"/></svg>
<svg style="left:372px;top:196px" width="28" height="30" viewBox="372 196 28 30"><path d="M375.4 218V220.4Q375.4 222.4 377.4 222.4H394.6Q396.6 222.4 396.6 220.4V218" fill="none" stroke="#474747" stroke-width="2.9"/><path d="M386 198.1V215.4M379.2 208.6L386 215.6L392.8 208.6" fill="none" stroke="#474747" stroke-width="2.9"/></svg>
<svg style="left:1131px;top:196px" width="32" height="32" viewBox="1131 196 32 32"><path d="M1144.3 211V202.4Q1144.3 199.3 1147.05 199.3Q1149.8 199.3 1149.8 202.4V211" fill="none" stroke="#474747" stroke-width="2.4"/><path d="M1136.4 212.2H1157.5V218H1136.4ZM1136.4 218L1134.4 224.8H1159.8L1157.5 218" fill="none" stroke="#474747" stroke-width="2.4" stroke-linejoin="round"/><path d="M1140.3 220.4V225M1147 220.4V225M1153.8 220.4V225" stroke="#474747" stroke-width="2.4"/></svg>
<div class="tl">
<span style="position:absolute;top:85.99px;line-height:34px;font-size:26px;color:#4a4a4a;white-space:pre;font-weight:700;letter-spacing:0.667px;left:770.60px;">DevTools - www.youtube.com/</span>
<span style="position:absolute;top:143.18px;line-height:31px;font-size:24px;color:#474747;white-space:pre;letter-spacing:0.365px;left:273.90px;">Elements</span>
<span style="position:absolute;top:143.18px;line-height:31px;font-size:24px;color:#474747;white-space:pre;letter-spacing:0.540px;left:425.00px;">Recorder</span>
<span style="position:absolute;top:143.18px;line-height:31px;font-size:24px;color:#474747;white-space:pre;letter-spacing:1.011px;left:599.40px;">Network</span>
<span style="position:absolute;top:143.18px;line-height:31px;font-size:24px;color:#474747;white-space:pre;letter-spacing:0.659px;left:740.80px;">Sources</span>
<span style="position:absolute;top:143.18px;line-height:31px;font-size:24px;color:#474747;white-space:pre;letter-spacing:1.106px;left:1073.00px;">Memory</span>
<span style="position:absolute;top:143.18px;line-height:31px;font-size:24px;color:#474747;white-space:pre;letter-spacing:0.573px;left:1213.00px;">Console</span>
<span style="position:absolute;top:143.18px;line-height:31px;font-size:24px;color:#0b57d0;white-space:pre;letter-spacing:0.811px;left:881.00px;">Performance</span>
<span style="position:absolute;top:145.38px;line-height:31px;font-size:24px;color:#303030;white-space:pre;letter-spacing:0.227px;left:1562.80px;">162</span>
<span style="position:absolute;top:145.38px;line-height:31px;font-size:24px;color:#303030;white-space:pre;left:1657.40px;">2</span>
<span style="position:absolute;top:197.18px;line-height:31px;font-size:24px;color:#a3a3a3;white-space:pre;letter-spacing:0.610px;left:444.00px;">www.youtube.com #1</span>
<span style="position:absolute;top:197.18px;line-height:31px;font-size:24px;color:#303030;white-space:pre;letter-spacing:0.729px;left:817.80px;">Screenshots</span>
<span style="position:absolute;top:197.18px;line-height:31px;font-size:24px;color:#303030;white-space:pre;letter-spacing:0.926px;left:1017.00px;">Memory</span>
<span style="position:absolute;top:260.18px;line-height:31px;font-size:24px;color:#1f1f1f;white-space:pre;letter-spacing:0.683px;left:129.70px;">Full range (34307.26ms)</span>
<span style="position:absolute;top:260.18px;line-height:31px;font-size:24px;color:#0b57d0;white-space:pre;font-weight:700;letter-spacing:1.006px;left:463.00px;">1776.91ms</span>
<span style="position:absolute;top:1042.48px;line-height:31px;font-size:24px;color:#0b57d0;white-space:pre;letter-spacing:0.569px;left:131.00px;">Summary</span>
<span style="position:absolute;top:1042.48px;line-height:31px;font-size:24px;color:#474747;white-space:pre;letter-spacing:1.387px;left:277.00px;">Bottom-Up</span>
<span style="position:absolute;top:1042.48px;line-height:31px;font-size:24px;color:#474747;white-space:pre;letter-spacing:0.407px;left:442.70px;">Call Tree</span>
<span style="position:absolute;top:1042.48px;line-height:31px;font-size:24px;color:#474747;white-space:pre;letter-spacing:0.551px;left:580.50px;">Event Log</span>
<span style="position:absolute;top:1106.48px;line-height:31px;font-size:24px;color:#0b57d0;white-space:pre;letter-spacing:0.473px;left:187.60px;">Console</span>
<span style="position:absolute;top:311.07px;line-height:26px;font-size:20px;color:#1f1f1f;white-space:pre;letter-spacing:0.861px;right:1631.14px;">200 ms</span>
<span style="position:absolute;top:311.07px;line-height:26px;font-size:20px;color:#1f1f1f;white-space:pre;letter-spacing:0.861px;right:1439.14px;">400 ms</span>
<span style="position:absolute;top:311.07px;line-height:26px;font-size:20px;color:#1f1f1f;white-space:pre;letter-spacing:0.861px;right:1247.14px;">600 ms</span>
<span style="position:absolute;top:311.07px;line-height:26px;font-size:20px;color:#1f1f1f;white-space:pre;letter-spacing:0.861px;right:1055.14px;">800 ms</span>
<span style="position:absolute;top:311.07px;line-height:26px;font-size:20px;color:#1f1f1f;white-space:pre;letter-spacing:0.497px;right:863.50px;">1000 ms</span>
<span style="position:absolute;top:311.07px;line-height:26px;font-size:20px;color:#1f1f1f;white-space:pre;letter-spacing:0.497px;right:671.50px;">1200 ms</span>
<span style="position:absolute;top:311.07px;line-height:26px;font-size:20px;color:#1f1f1f;white-space:pre;letter-spacing:0.497px;right:479.50px;">1400 ms</span>
<span style="position:absolute;top:311.07px;line-height:26px;font-size:20px;color:#1f1f1f;white-space:pre;letter-spacing:0.497px;right:287.50px;">1600 ms</span>
<span style="position:absolute;top:311.07px;line-height:26px;font-size:20px;color:#1f1f1f;white-space:pre;letter-spacing:0.497px;left:1758.40px;">1800 ms</span>
<span style="position:absolute;top:342.27px;line-height:26px;font-size:20px;color:#9a9a9a;white-space:pre;font-weight:700;letter-spacing:0.883px;left:1767.50px;">CPU</span>
<span style="position:absolute;top:386.57px;line-height:26px;font-size:20px;color:#9a9a9a;white-space:pre;font-weight:700;letter-spacing:0.350px;left:1770.80px;">NET</span>
<div style="position:absolute;left:112px;top:408px;width:1685px;height:40px;overflow:hidden"><div style="position:absolute;left:-112px;top:-408px;width:1932px;height:1298px"><span style="position:absolute;top:412.08px;line-height:29px;font-size:22px;color:#1f1f1f;white-space:pre;letter-spacing:0.868px;right:1744.93px;">24120 ms</span>
<span style="position:absolute;top:412.08px;line-height:29px;font-size:22px;color:#1f1f1f;white-space:pre;letter-spacing:0.868px;right:1564.93px;">24140 ms</span>
<span style="position:absolute;top:412.08px;line-height:29px;font-size:22px;color:#1f1f1f;white-space:pre;letter-spacing:0.868px;right:1384.93px;">24160 ms</span>
<span style="position:absolute;top:412.08px;line-height:29px;font-size:22px;color:#1f1f1f;white-space:pre;letter-spacing:0.868px;right:1204.93px;">24180 ms</span>
<span style="position:absolute;top:412.08px;line-height:29px;font-size:22px;color:#1f1f1f;white-space:pre;letter-spacing:1.354px;right:1023.85px;">24200 ms</span>
<span style="position:absolute;top:412.08px;line-height:29px;font-size:22px;color:#1f1f1f;white-space:pre;letter-spacing:1.354px;right:842.45px;">24220 ms</span>
<span style="position:absolute;top:412.08px;line-height:29px;font-size:22px;color:#1f1f1f;white-space:pre;letter-spacing:1.354px;right:662.45px;">24240 ms</span>
<span style="position:absolute;top:412.08px;line-height:29px;font-size:22px;color:#1f1f1f;white-space:pre;letter-spacing:1.354px;right:482.45px;">24260 ms</span>
<span style="position:absolute;top:412.08px;line-height:29px;font-size:22px;color:#1f1f1f;white-space:pre;letter-spacing:1.354px;right:302.45px;">24280 ms</span>
<span style="position:absolute;top:412.08px;line-height:29px;font-size:22px;color:#1f1f1f;white-space:pre;letter-spacing:1.354px;right:122.05px;">24300 ms</span></div></div>
<span style="position:absolute;top:445.58px;line-height:29px;font-size:22px;color:#1f1f1f;white-space:pre;letter-spacing:1.085px;left:146.30px;">Network</span>
<span style="position:absolute;top:484.28px;line-height:29px;font-size:22px;color:#1f1f1f;white-space:pre;letter-spacing:0.731px;left:146.30px;">Main — https://www.youtube.com/</span>
<span style="position:absolute;top:517.88px;line-height:29px;font-size:22px;color:#2a2a2a;white-space:pre;letter-spacing:0.750px;left:154.00px;">Task</span>
<span style="position:absolute;top:517.88px;line-height:29px;font-size:22px;color:#2a2a2a;white-space:pre;letter-spacing:0.750px;left:1209.80px;">Task</span>
<span style="position:absolute;top:517.88px;line-height:29px;font-size:22px;color:#2a2a2a;white-space:pre;letter-spacing:0.750px;left:1658.00px;">Task</span>
<span style="position:absolute;top:551.88px;line-height:29px;font-size:22px;color:#2a2a2a;white-space:pre;letter-spacing:0.553px;left:156.20px;">Animation Frame Fired</span>
<span style="position:absolute;top:551.88px;line-height:29px;font-size:22px;color:#2a2a2a;white-space:pre;letter-spacing:0.553px;left:1216.00px;">Animation Frame Fired</span>
<span style="position:absolute;top:551.88px;line-height:29px;font-size:22px;color:#2a2a2a;white-space:pre;letter-spacing:0.161px;left:1674.00px;">Anim…ired</span>
<span style="position:absolute;top:585.88px;line-height:29px;font-size:22px;color:#2a2a2a;white-space:pre;letter-spacing:0.642px;left:156.20px;">Function Call</span>
<span style="position:absolute;top:585.88px;line-height:29px;font-size:22px;color:#2a2a2a;white-space:pre;letter-spacing:-0.283px;left:986.00px;">Run M…asks</span>
<span style="position:absolute;top:585.88px;line-height:29px;font-size:22px;color:#2a2a2a;white-space:pre;letter-spacing:0.642px;left:1216.00px;">Function Call</span>
<span style="position:absolute;top:585.88px;line-height:29px;font-size:22px;color:#2a2a2a;white-space:pre;letter-spacing:-0.289px;left:1674.00px;">Func…Call</span>
<span style="position:absolute;top:619.88px;line-height:29px;font-size:22px;color:#3f4d6c;white-space:pre;letter-spacing:0.651px;left:156.60px;">(anonymous)</span>
<span style="position:absolute;top:619.88px;line-height:29px;font-size:22px;color:#2a2a2a;white-space:pre;letter-spacing:-0.438px;left:990.00px;">Fun…ll</span>
<span style="position:absolute;top:619.88px;line-height:29px;font-size:22px;color:#2a2a2a;white-space:pre;letter-spacing:0.611px;left:1217.00px;">(anonymous)</span>
<span style="position:absolute;top:619.88px;line-height:29px;font-size:22px;color:#2a2a2a;white-space:pre;letter-spacing:-0.043px;left:1675.00px;">(ano…ous)</span>
<span style="position:absolute;top:653.88px;line-height:29px;font-size:22px;color:#2a2a2a;white-space:pre;letter-spacing:0.651px;left:156.60px;">(anonymous)</span>
<span style="position:absolute;top:653.88px;line-height:29px;font-size:22px;color:#2a2a2a;white-space:pre;letter-spacing:-0.508px;left:992.00px;">mWa</span>
<span style="position:absolute;top:653.88px;line-height:29px;font-size:22px;color:#2a2a2a;white-space:pre;letter-spacing:0.611px;left:1217.00px;">(anonymous)</span>
<span style="position:absolute;top:653.88px;line-height:29px;font-size:22px;color:#2a2a2a;white-space:pre;letter-spacing:-0.043px;left:1675.00px;">(ano…ous)</span>
<span style="position:absolute;top:687.88px;line-height:29px;font-size:22px;color:#2a2a2a;white-space:pre;letter-spacing:0.420px;left:157.60px;">V</span>
<span style="position:absolute;top:687.88px;line-height:29px;font-size:22px;color:#2a2a2a;white-space:pre;letter-spacing:-0.725px;left:993.00px;">(an…s)</span>
<span style="position:absolute;top:687.88px;line-height:29px;font-size:22px;color:#2a2a2a;white-space:pre;letter-spacing:0.420px;left:1217.00px;">(…</span>
<span style="position:absolute;top:687.88px;line-height:29px;font-size:22px;color:#2a2a2a;white-space:pre;letter-spacing:0.420px;left:1264.60px;">V</span>
<span style="position:absolute;top:687.88px;line-height:29px;font-size:22px;color:#2a2a2a;white-space:pre;letter-spacing:0.420px;left:1674.60px;">V</span>
<span style="position:absolute;top:721.88px;line-height:29px;font-size:22px;color:#2a2a2a;white-space:pre;letter-spacing:0.420px;left:158.00px;">S</span>
<span style="position:absolute;top:721.88px;line-height:29px;font-size:22px;color:#2a2a2a;white-space:pre;letter-spacing:0.420px;left:1033.00px;">(…</span>
<span style="position:absolute;top:721.88px;line-height:29px;font-size:22px;color:#2a2a2a;white-space:pre;letter-spacing:0.420px;left:1264.60px;">S</span>
<span style="position:absolute;top:721.88px;line-height:29px;font-size:22px;color:#2a2a2a;white-space:pre;letter-spacing:0.420px;left:1675.00px;">S</span>
<span style="position:absolute;top:755.88px;line-height:29px;font-size:22px;color:#2a2a2a;white-space:pre;letter-spacing:0.651px;left:159.00px;">(anonymous)</span>
<span style="position:absolute;top:755.88px;line-height:29px;font-size:22px;color:#2a2a2a;white-space:pre;letter-spacing:0.651px;left:1265.20px;">(anonymous)</span>
<span style="position:absolute;top:755.88px;line-height:29px;font-size:22px;color:#2a2a2a;white-space:pre;letter-spacing:-0.043px;left:1675.00px;">(ano…ous)</span>
<span style="position:absolute;top:789.88px;line-height:29px;font-size:22px;color:#2a2a2a;white-space:pre;letter-spacing:0.897px;left:157.80px;">renderChunk_</span>
<span style="position:absolute;top:789.88px;line-height:29px;font-size:22px;color:#2a2a2a;white-space:pre;letter-spacing:0.897px;left:1264.00px;">renderChunk_</span>
<span style="position:absolute;top:789.88px;line-height:29px;font-size:22px;color:#2a2a2a;white-space:pre;letter-spacing:0.283px;left:1674.20px;">rend…nk_</span>
<span style="position:absolute;top:823.88px;line-height:29px;font-size:22px;color:#2a2a2a;white-space:pre;letter-spacing:0.728px;left:157.80px;">fillRange_</span>
<span style="position:absolute;top:823.88px;line-height:29px;font-size:22px;color:#2a2a2a;white-space:pre;letter-spacing:0.728px;left:1264.00px;">fillRange_</span>
<span style="position:absolute;top:823.88px;line-height:29px;font-size:22px;color:#2a2a2a;white-space:pre;letter-spacing:0.728px;left:1674.20px;">fillRange_</span>
<span style="position:absolute;top:857.88px;line-height:29px;font-size:22px;color:#2a2a2a;white-space:pre;letter-spacing:0.651px;left:159.00px;">(anonymous)</span>
<span style="position:absolute;top:857.88px;line-height:29px;font-size:22px;color:#2a2a2a;white-space:pre;letter-spacing:0.651px;left:1265.20px;">(anonymous)</span>
<span style="position:absolute;top:857.88px;line-height:29px;font-size:22px;color:#2a2a2a;white-space:pre;letter-spacing:-0.043px;left:1675.00px;">(ano…ous)</span>
<span style="position:absolute;top:891.88px;line-height:29px;font-size:22px;color:#2a2a2a;white-space:pre;letter-spacing:1.312px;left:157.80px;">By</span>
<span style="position:absolute;top:891.88px;line-height:29px;font-size:22px;color:#2a2a2a;white-space:pre;letter-spacing:1.312px;left:1264.00px;">By</span>
<span style="position:absolute;top:891.88px;line-height:29px;font-size:22px;color:#2a2a2a;white-space:pre;letter-spacing:1.312px;left:1674.20px;">By</span>
<span style="position:absolute;top:925.88px;line-height:29px;font-size:22px;color:#2a2a2a;white-space:pre;letter-spacing:0.852px;left:157.80px;">lXa</span>
<span style="position:absolute;top:925.88px;line-height:29px;font-size:22px;color:#2a2a2a;white-space:pre;letter-spacing:0.852px;left:1264.00px;">lXa</span>
<span style="position:absolute;top:925.88px;line-height:29px;font-size:22px;color:#2a2a2a;white-space:pre;letter-spacing:0.852px;left:1674.20px;">lXa</span>
<span style="position:absolute;top:959.88px;line-height:29px;font-size:22px;color:#2a2a2a;white-space:pre;letter-spacing:0.651px;left:159.00px;">(anonymous)</span>
<span style="position:absolute;top:959.88px;line-height:29px;font-size:22px;color:#2a2a2a;white-space:pre;letter-spacing:0.651px;left:1265.20px;">(anonymous)</span>
<span style="position:absolute;top:959.88px;line-height:29px;font-size:22px;color:#2a2a2a;white-space:pre;letter-spacing:-0.043px;left:1675.00px;">(ano…ous)</span>
<span style="position:absolute;top:993.88px;line-height:29px;font-size:22px;color:#2a2a2a;white-space:pre;letter-spacing:0.651px;left:159.00px;">(anonymous)</span>
<span style="position:absolute;top:993.88px;line-height:29px;font-size:22px;color:#2a2a2a;white-space:pre;letter-spacing:0.651px;left:1265.20px;">(anonymous)</span>
<span style="position:absolute;top:993.88px;line-height:29px;font-size:22px;color:#2a2a2a;white-space:pre;letter-spacing:-0.043px;left:1675.00px;">(ano…ous)</span>
</div>
<div style="position:absolute;left:112px;top:310px;width:621px;height:98px;background:rgba(117,163,245,0.304)"></div>
<div style="position:absolute;left:918px;top:310px;width:902px;height:98px;background:rgba(117,163,245,0.304)"></div>
<div style="position:absolute;left:733px;top:347px;width:3px;height:61px;background:#a8c7fa"></div>
<div style="position:absolute;left:915px;top:347px;width:3px;height:61px;background:#a8c7fa"></div>
<div style="position:absolute;left:726.5px;top:310px;width:15.4px;height:34px;border:2px solid #a8c7fa;border-radius:7px;background:#d3e3fd"></div>
<div style="position:absolute;left:732.0px;top:321.5px;width:2.2px;height:14.5px;background:#0b57d0"></div>
<div style="position:absolute;left:738.2px;top:321.5px;width:2.2px;height:14.5px;background:#0b57d0"></div>
<div style="position:absolute;left:905.3px;top:310px;width:15.4px;height:34px;border:2px solid #a8c7fa;border-radius:7px;background:#d3e3fd"></div>
<div style="position:absolute;left:910.8px;top:321.5px;width:2.2px;height:14.5px;background:#0b57d0"></div>
<div style="position:absolute;left:917.0px;top:321.5px;width:2.2px;height:14.5px;background:#0b57d0"></div>
<div style="position:absolute;left:459px;top:637px;width:370.6px;height:321.6px;border-radius:13px;background:#fff;box-shadow:0 0 0 1.6px rgba(0,0,0,.2), 0 3px 10px 1px rgba(0,0,0,.22), 0 8px 24px rgba(0,0,0,.10);overflow:hidden"><div style="position:absolute;left:0;top:257px;width:100%;height:48px;background:#f1f1f1"></div></div>
<div class="tl">
<span style="position:absolute;top:663.18px;line-height:31px;font-size:24px;color:#1f1f1f;white-space:pre;letter-spacing:0.976px;left:492.40px;">Hide function</span>
<span style="position:absolute;top:663.18px;line-height:31px;font-size:24px;color:#3a3a3a;white-space:pre;left:778.20px;">H</span>
<span style="position:absolute;top:711.18px;line-height:31px;font-size:24px;color:#1f1f1f;white-space:pre;letter-spacing:0.752px;left:492.40px;">Hide children</span>
<span style="position:absolute;top:711.18px;line-height:31px;font-size:24px;color:#3a3a3a;white-space:pre;left:778.00px;">C</span>
<span style="position:absolute;top:759.18px;line-height:31px;font-size:24px;color:#1f1f1f;white-space:pre;letter-spacing:0.744px;left:492.40px;">Hide repeating children</span>
<span style="position:absolute;top:759.18px;line-height:31px;font-size:24px;color:#3a3a3a;white-space:pre;left:779.20px;">R</span>
<span style="position:absolute;top:807.18px;line-height:31px;font-size:24px;color:#a9a9a9;white-space:pre;letter-spacing:0.544px;left:492.40px;">Reset children</span>
<span style="position:absolute;top:807.18px;line-height:31px;font-size:24px;color:#3a3a3a;white-space:pre;left:779.00px;">U</span>
<span style="position:absolute;top:855.18px;line-height:31px;font-size:24px;color:#a9a9a9;white-space:pre;letter-spacing:0.578px;left:492.40px;">Reset trace</span>
<span style="position:absolute;top:903.18px;line-height:31px;font-size:24px;color:#1f1f1f;white-space:pre;letter-spacing:0.851px;left:492.40px;">Add script to ignore list</span>
</div>
<svg style="left:780px;top:908px" width="34" height="46" viewBox="780 908 34 46"><path d="M787 915V941.2L793.2 935.4L797.4 945.6L801.6 943.9L797.4 933.8H805.6Z" fill="#000" stroke="#fff" stroke-width="2.2" stroke-linejoin="round"/><path d="M787 915V941.2L793.2 935.4L797.4 945.6L801.6 943.9L797.4 933.8H805.6Z" fill="#000"/></svg>
</div></div>

</body></html>
